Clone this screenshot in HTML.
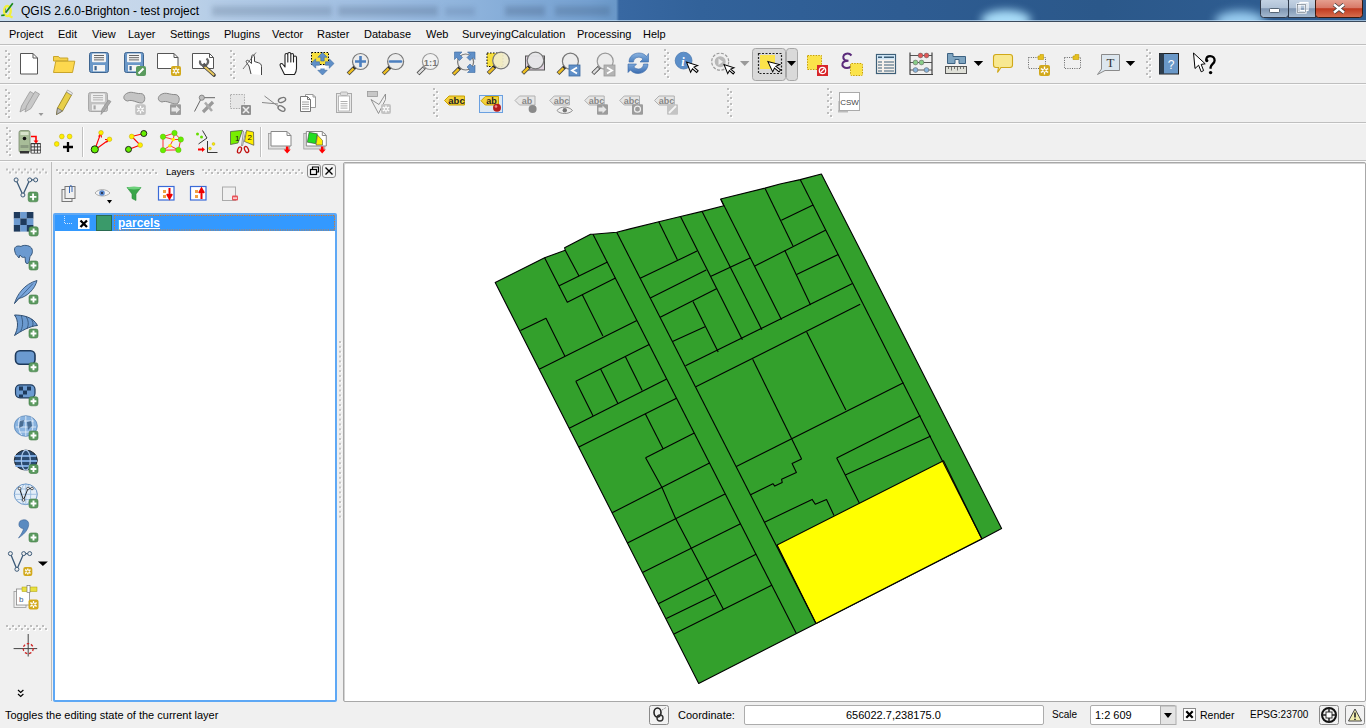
<!DOCTYPE html>
<html><head><meta charset="utf-8">
<style>
*{box-sizing:border-box;margin:0;padding:0}
html,body{width:1366px;height:728px;overflow:hidden;background:#f0f0f0;font-family:"Liberation Sans",sans-serif;font-size:11px;color:#000}
.a{position:absolute}
#title{left:0;top:0;width:1366px;height:22px;overflow:hidden;background:linear-gradient(90deg,#cfdcec 0px,#c4d6ea 150px,#b2cbe6 230px,#a2c0e2 350px,#8eb3dc 470px,#74a0d0 590px,#6a98c8 616px,#3868a2 619px,#32629a 700px,#2e5c92 900px,#2b588a 1100px,#2e5c90 1250px)}
#title .line{left:0;top:21px;width:1366px;height:1px;background:#3b4a5c}
.menu{top:28px;font-size:11px}
.hl{left:0;width:1366px;height:1px;background:#bfbfbf}
.hw{left:0;width:1366px;height:1px;background:#fbfbfb}
.ic{position:absolute;width:24px;height:24px}
.handle{position:absolute;width:6px;background-image:radial-gradient(circle,#c8c8c8 0.8px,transparent 1px);background-size:3px 3px}
</style></head><body>
<div id="title" class="a">
<div class="a" style="left:212px;top:6px;width:120px;height:10px;background:rgba(50,70,100,0.2);filter:blur(2.5px)"></div>
<div class="a" style="left:338px;top:6px;width:100px;height:10px;background:rgba(50,70,100,0.22);filter:blur(2.5px)"></div>
<div class="a" style="left:445px;top:7px;width:30px;height:9px;background:rgba(50,70,100,0.15);filter:blur(2.5px)"></div>
<div class="a" style="left:505px;top:6px;width:40px;height:10px;background:rgba(40,60,90,0.22);filter:blur(2.5px)"></div>
<div class="a" style="left:555px;top:6px;width:55px;height:10px;background:rgba(40,60,90,0.2);filter:blur(2.5px)"></div>
<div class="a" style="left:981px;top:10px;width:50px;height:20px;border-radius:50%;background:#a8dcf8;filter:blur(4px)"></div>
<div class="a" style="left:1215px;top:11px;width:50px;height:20px;border-radius:50%;background:#98ccf0;filter:blur(5px)"></div>
<div class="a" style="left:0;top:20px;width:1366px;height:1px;background:rgba(200,225,245,0.7)"></div>
<div class="a line"></div>
<div class="a" style="left:21px;top:4px;font-size:12px;color:#000">QGIS 2.6.0-Brighton - test project</div>
</div>
<!-- menu -->
<div class="a menu" style="left:9px">Project</div>
<div class="a menu" style="left:58px">Edit</div>
<div class="a menu" style="left:92px">View</div>
<div class="a menu" style="left:128px">Layer</div>
<div class="a menu" style="left:170px">Settings</div>
<div class="a menu" style="left:224px">Plugins</div>
<div class="a menu" style="left:272px">Vector</div>
<div class="a menu" style="left:317px">Raster</div>
<div class="a menu" style="left:364px">Database</div>
<div class="a menu" style="left:426px">Web</div>
<div class="a menu" style="left:462px">SurveyingCalculation</div>
<div class="a menu" style="left:577px">Processing</div>
<div class="a menu" style="left:643px">Help</div>
<div class="a hl" style="top:44px"></div><div class="a hw" style="top:45px"></div>
<div class="a hl" style="top:83px"></div><div class="a hw" style="top:84px"></div>
<div class="a hl" style="top:122px"></div><div class="a hw" style="top:123px"></div>
<div class="a hl" style="top:160px"></div><div class="a hw" style="top:161px"></div>
<!-- left separator -->
<div class="a" style="left:51px;top:162px;width:1px;height:539px;background:#bcbcbc"></div>
<!-- layers panel -->
<div class="a" style="left:166px;top:166px;font-size:9.5px">Layers</div>
<div class="a" style="left:53px;top:213px;width:284px;height:489px;border:2px solid #5ea8f5;border-radius:2px;background:#fff"></div>
<div class="a" style="left:55px;top:215px;width:280px;height:16px;background:#3399ff"></div>
<div class="a" style="left:118px;top:216px;font-size:12px;font-weight:bold;color:#fff;text-decoration:underline">parcels</div>
<!-- map canvas -->
<div class="a" style="left:343px;top:162px;width:1023px;height:540px;border:1px solid #a8a8a8;border-radius:2px;background:#fff;box-shadow:inset 1px 1px 0 #d4d4d4"></div>
<svg id="map" class="a" style="left:0;top:0" width="1366" height="728"><polygon points="495.2,282.5 544.6,257.8 565.2,250.2 564.6,247.7 590.6,234.3 593.0,234.3 616.7,232.3 630.0,228.9 658.8,221.7 680.5,216.5 702.1,211.4 723.8,205.8 720.7,199.0 765.0,188.1 780.0,184.0 800.2,179.6 821.4,174.0 866.3,261.8 867.6,264.6 1001.6,528.4 981.8,538.9 698.7,683.5" fill="#33a02c" stroke="#000" stroke-width="1.1" stroke-linejoin="round"/>
<polygon points="777.1,544.9 943.5,460.8 981.8,538.7 816.0,623.4" fill="#ffff00" stroke="#000" stroke-width="1.1" stroke-linejoin="round"/>
<polyline points="593.0,234.3 796.2,633.2" fill="none" stroke="#000" stroke-width="1.1" stroke-linejoin="round"/>
<polyline points="616.7,232.3 816.0,623.4" fill="none" stroke="#000" stroke-width="1.1" stroke-linejoin="round"/>
<polyline points="800.2,179.6 981.8,538.8" fill="none" stroke="#000" stroke-width="1.1" stroke-linejoin="round"/>
<polyline points="544.6,257.8 567.3,302.3 615.5,278.0" fill="none" stroke="#000" stroke-width="1.1" stroke-linejoin="round"/>
<polyline points="559.2,285.8 607.5,262.1" fill="none" stroke="#000" stroke-width="1.1" stroke-linejoin="round"/>
<polyline points="565.2,250.2 579.0,276.1" fill="none" stroke="#000" stroke-width="1.1" stroke-linejoin="round"/>
<polyline points="582.3,294.8 602.9,336.1" fill="none" stroke="#000" stroke-width="1.1" stroke-linejoin="round"/>
<polyline points="520.5,330.5 546.0,318.2 564.8,356.0" fill="none" stroke="#000" stroke-width="1.1" stroke-linejoin="round"/>
<polyline points="539.2,369.3 636.9,320.5" fill="none" stroke="#000" stroke-width="1.1" stroke-linejoin="round"/>
<polyline points="575.8,381.2 649.2,344.6" fill="none" stroke="#000" stroke-width="1.1" stroke-linejoin="round"/>
<polyline points="575.8,381.2 593.1,416.1" fill="none" stroke="#000" stroke-width="1.1" stroke-linejoin="round"/>
<polyline points="600.6,368.9 617.9,403.6" fill="none" stroke="#000" stroke-width="1.1" stroke-linejoin="round"/>
<polyline points="625.3,356.5 642.2,390.5" fill="none" stroke="#000" stroke-width="1.1" stroke-linejoin="round"/>
<polyline points="569.2,428.2 666.7,379.0" fill="none" stroke="#000" stroke-width="1.1" stroke-linejoin="round"/>
<polyline points="578.8,447.1 676.5,398.2" fill="none" stroke="#000" stroke-width="1.1" stroke-linejoin="round"/>
<polyline points="645.3,413.7 663.2,449.0" fill="none" stroke="#000" stroke-width="1.1" stroke-linejoin="round"/>
<polyline points="645.6,457.8 694.3,433.1" fill="none" stroke="#000" stroke-width="1.1" stroke-linejoin="round"/>
<polyline points="645.6,457.8 662.1,487.7 667.9,501.1 675.5,518.2 723.5,609.5" fill="none" stroke="#000" stroke-width="1.1" stroke-linejoin="round"/>
<polyline points="612.1,512.8 709.5,463.0" fill="none" stroke="#000" stroke-width="1.1" stroke-linejoin="round"/>
<polyline points="627.4,542.9 725.0,493.9" fill="none" stroke="#000" stroke-width="1.1" stroke-linejoin="round"/>
<polyline points="642.5,572.6 740.5,523.8" fill="none" stroke="#000" stroke-width="1.1" stroke-linejoin="round"/>
<polyline points="658.3,603.7 756.0,554.3" fill="none" stroke="#000" stroke-width="1.1" stroke-linejoin="round"/>
<polyline points="666.4,618.6 714.7,595.1" fill="none" stroke="#000" stroke-width="1.1" stroke-linejoin="round"/>
<polyline points="674.0,634.0 771.7,585.2" fill="none" stroke="#000" stroke-width="1.1" stroke-linejoin="round"/>
<polyline points="658.8,221.7 677.4,259.8" fill="none" stroke="#000" stroke-width="1.1" stroke-linejoin="round"/>
<polyline points="640.2,278.3 697.0,251.1" fill="none" stroke="#000" stroke-width="1.1" stroke-linejoin="round"/>
<polyline points="680.5,216.5 742.4,339.8" fill="none" stroke="#000" stroke-width="1.1" stroke-linejoin="round"/>
<polyline points="702.1,211.4 761.9,329.8" fill="none" stroke="#000" stroke-width="1.1" stroke-linejoin="round"/>
<polyline points="720.7,199.0 781.5,319.8" fill="none" stroke="#000" stroke-width="1.1" stroke-linejoin="round"/>
<polyline points="784.7,250.2 810.6,304.9" fill="none" stroke="#000" stroke-width="1.1" stroke-linejoin="round"/>
<polyline points="765.2,188.8 793.0,246.1" fill="none" stroke="#000" stroke-width="1.1" stroke-linejoin="round"/>
<polyline points="650.3,297.9 706.2,270.1" fill="none" stroke="#000" stroke-width="1.1" stroke-linejoin="round"/>
<polyline points="660.2,317.2 717.0,288.6" fill="none" stroke="#000" stroke-width="1.1" stroke-linejoin="round"/>
<polyline points="693.0,301.5 718.2,352.1" fill="none" stroke="#000" stroke-width="1.1" stroke-linejoin="round"/>
<polyline points="672.5,341.5 705.0,326.7" fill="none" stroke="#000" stroke-width="1.1" stroke-linejoin="round"/>
<polyline points="711.0,276.3 750.6,257.7" fill="none" stroke="#000" stroke-width="1.1" stroke-linejoin="round"/>
<polyline points="754.8,266.0 825.9,230.1" fill="none" stroke="#000" stroke-width="1.1" stroke-linejoin="round"/>
<polyline points="781.4,220.2 813.1,204.9" fill="none" stroke="#000" stroke-width="1.1" stroke-linejoin="round"/>
<polyline points="796.6,274.4 838.3,254.4" fill="none" stroke="#000" stroke-width="1.1" stroke-linejoin="round"/>
<polyline points="685.5,365.8 852.5,283.5" fill="none" stroke="#000" stroke-width="1.1" stroke-linejoin="round"/>
<polyline points="695.8,386.8 860.2,304.3" fill="none" stroke="#000" stroke-width="1.1" stroke-linejoin="round"/>
<polyline points="752.7,359.3 801.6,458.9" fill="none" stroke="#000" stroke-width="1.1" stroke-linejoin="round"/>
<polyline points="806.7,332.1 845.8,410.0" fill="none" stroke="#000" stroke-width="1.1" stroke-linejoin="round"/>
<polyline points="736.3,466.4 903.5,382.8" fill="none" stroke="#000" stroke-width="1.1" stroke-linejoin="round"/>
<polyline points="801.6,458.9 792.1,463.5 796.4,472.5 781.6,479.3 782.2,482.4 774.8,486.1 772.9,483.7 750.6,494.8" fill="none" stroke="#000" stroke-width="1.1" stroke-linejoin="round"/>
<polyline points="836.7,458.0 920.5,415.8" fill="none" stroke="#000" stroke-width="1.1" stroke-linejoin="round"/>
<polyline points="836.7,458.0 859.3,502.9" fill="none" stroke="#000" stroke-width="1.1" stroke-linejoin="round"/>
<polyline points="845.3,474.9 930.9,436.1" fill="none" stroke="#000" stroke-width="1.1" stroke-linejoin="round"/>
<polyline points="764.5,522.2 812.1,499.4 815.3,504.3 826.5,499.6 834.0,515.5" fill="none" stroke="#000" stroke-width="1.1" stroke-linejoin="round"/></svg>
<!-- status bar -->
<div class="a" style="left:5px;top:709px">Toggles the editing state of the current layer</div>
<div class="a" style="left:678px;top:709px">Coordinate:</div>
<div class="a" style="left:744px;top:705px;width:300px;height:20px;border:1px solid #acacac;border-radius:2px;background:#fff"></div>
<div class="a" style="left:846px;top:709px">656022.7,238175.0</div>
<div class="a" style="left:1052px;top:709px;font-size:10px">Scale</div>
<div class="a" style="left:1090px;top:705px;width:86px;height:20px;border:1px solid #acacac;border-radius:2px;background:#fff"></div>
<div class="a" style="left:1095px;top:709px">1:2 609</div>
<div class="a" style="left:1200px;top:709px;font-size:10.5px">Render</div>
<div class="a" style="left:1250px;top:709px;font-size:10px">EPSG:23700</div>
<svg class="a" style="left:0;top:0;overflow:visible" width="1366" height="728"><defs><linearGradient id="gref" x1="0" y1="0" x2="0" y2="1"><stop offset="0" stop-color="#8cb4e0"/><stop offset="1" stop-color="#4a80c0"/></linearGradient><linearGradient id="gref2" x1="0" y1="0" x2="0" y2="1"><stop offset="0" stop-color="#7aa6d8"/><stop offset="1" stop-color="#3a6cb0"/></linearGradient><linearGradient id="gb" x1="0" y1="0" x2="0" y2="1"><stop offset="0" stop-color="#c8d6e6"/><stop offset="0.5" stop-color="#b0c2d6"/><stop offset="0.55" stop-color="#7f96b2"/><stop offset="1" stop-color="#a8bcd2"/></linearGradient><linearGradient id="gr" x1="0" y1="0" x2="0" y2="1"><stop offset="0" stop-color="#e8a898"/><stop offset="0.5" stop-color="#d87a68"/><stop offset="0.55" stop-color="#c03a20"/><stop offset="1" stop-color="#d87050"/></linearGradient></defs><rect x="6" y="51" width="2" height="2" fill="#fff"/><rect x="5" y="50" width="2" height="2" fill="#bdbdbd"/>
<rect x="9" y="54" width="2" height="2" fill="#fff"/><rect x="8" y="53" width="2" height="2" fill="#bdbdbd"/>
<rect x="6" y="57" width="2" height="2" fill="#fff"/><rect x="5" y="56" width="2" height="2" fill="#bdbdbd"/>
<rect x="9" y="60" width="2" height="2" fill="#fff"/><rect x="8" y="59" width="2" height="2" fill="#bdbdbd"/>
<rect x="6" y="63" width="2" height="2" fill="#fff"/><rect x="5" y="62" width="2" height="2" fill="#bdbdbd"/>
<rect x="9" y="66" width="2" height="2" fill="#fff"/><rect x="8" y="65" width="2" height="2" fill="#bdbdbd"/>
<rect x="6" y="69" width="2" height="2" fill="#fff"/><rect x="5" y="68" width="2" height="2" fill="#bdbdbd"/>
<rect x="9" y="72" width="2" height="2" fill="#fff"/><rect x="8" y="71" width="2" height="2" fill="#bdbdbd"/>
<rect x="6" y="75" width="2" height="2" fill="#fff"/><rect x="5" y="74" width="2" height="2" fill="#bdbdbd"/>
<rect x="9" y="78" width="2" height="2" fill="#fff"/><rect x="8" y="77" width="2" height="2" fill="#bdbdbd"/>
<path d="M20.5 53.5H33L37.5 58V74.0H20.5Z" fill="#fff" stroke="#555" stroke-width="1"/>
<path d="M33 53.5V58H37.5" fill="none" stroke="#555" stroke-width="1"/>
<path d="M53.5 56.5H58.5L59.8 58H67.8V61H53.5Z" fill="#f5d24a" stroke="#c9a52a" stroke-width="1"/>
<path d="M53.5 72.5L55.8 61.2H74.8L72.5 72.5Z" fill="#fdd84e" stroke="#c9a52a" stroke-width="1"/>
<rect x="89.5" y="52.5" width="19" height="20" rx="2" fill="#6b98c8" stroke="#3e6590" stroke-width="1"/>
<rect x="92" y="53.5" width="14" height="8.82" rx="1" fill="#f4f4f4"/>
<path d="M94 55.5H104" stroke="#555" stroke-width="0.9"/>
<path d="M94 57.7H104" stroke="#555" stroke-width="0.9"/>
<path d="M94 59.9H104" stroke="#555" stroke-width="0.9"/>
<rect x="93" y="65.02" width="12" height="6.3" fill="#f4f4f4"/>
<rect x="94.5" y="66.07" width="2.2" height="4.2" fill="#3e6590"/>
<rect x="124.5" y="52.5" width="19" height="20" rx="2" fill="#6b98c8" stroke="#3e6590" stroke-width="1"/>
<rect x="127" y="53.5" width="14" height="8.82" rx="1" fill="#f4f4f4"/>
<path d="M129 55.5H139" stroke="#555" stroke-width="0.9"/>
<path d="M129 57.7H139" stroke="#555" stroke-width="0.9"/>
<path d="M129 59.9H139" stroke="#555" stroke-width="0.9"/>
<rect x="128" y="65.02" width="12" height="6.3" fill="#f4f4f4"/>
<rect x="129.5" y="66.07" width="2.2" height="4.2" fill="#3e6590"/>
<rect x="136" y="66" width="10" height="10" rx="2" fill="#5a9a5e"/><path d="M138.5 73.5L143.5 68.5" stroke="#fff" stroke-width="2"/>
<path d="M157.5 53.5H174.0L178.0 57.5V68.5H157.5Z" fill="#fff" stroke="#555" stroke-width="1"/>
<path d="M174.0 53.5V57.5H178.0" fill="none" stroke="#555" stroke-width="1"/>
<rect x="171" y="66" width="10" height="10" rx="2" fill="#d2a91c"/>
<path d="M176.0 67.5V74.5M172.8 69.1L179.2 72.9M172.8 72.9L179.2 69.1" stroke="#fff" stroke-width="1.3"/>
<circle cx="176.0" cy="71.0" r="1.6" fill="#d2a91c" stroke="#fff" stroke-width="0.8"/>
<path d="M192.5 53.5H209.5L213.5 57.5V68.5H192.5Z" fill="#fff" stroke="#555" stroke-width="1"/>
<path d="M209.5 53.5V57.5H213.5" fill="none" stroke="#555" stroke-width="1"/>
<path d="M204 66L214 75" stroke="#333" stroke-width="3.6" stroke-linecap="round"/><path d="M205 67L213.5 74.5" stroke="#e8c860" stroke-width="2.2" stroke-linecap="round"/>
<path d="M200.2 60.5A4 4 0 1 0 206.5 58.5" fill="none" stroke="#666" stroke-width="2.2"/><path d="M203.5 63.5L206 66" stroke="#555" stroke-width="2.4"/>
<rect x="231" y="51" width="2" height="2" fill="#fff"/><rect x="230" y="50" width="2" height="2" fill="#bdbdbd"/>
<rect x="234" y="54" width="2" height="2" fill="#fff"/><rect x="233" y="53" width="2" height="2" fill="#bdbdbd"/>
<rect x="231" y="57" width="2" height="2" fill="#fff"/><rect x="230" y="56" width="2" height="2" fill="#bdbdbd"/>
<rect x="234" y="60" width="2" height="2" fill="#fff"/><rect x="233" y="59" width="2" height="2" fill="#bdbdbd"/>
<rect x="231" y="63" width="2" height="2" fill="#fff"/><rect x="230" y="62" width="2" height="2" fill="#bdbdbd"/>
<rect x="234" y="66" width="2" height="2" fill="#fff"/><rect x="233" y="65" width="2" height="2" fill="#bdbdbd"/>
<rect x="231" y="69" width="2" height="2" fill="#fff"/><rect x="230" y="68" width="2" height="2" fill="#bdbdbd"/>
<rect x="234" y="72" width="2" height="2" fill="#fff"/><rect x="233" y="71" width="2" height="2" fill="#bdbdbd"/>
<rect x="231" y="75" width="2" height="2" fill="#fff"/><rect x="230" y="74" width="2" height="2" fill="#bdbdbd"/>
<rect x="234" y="78" width="2" height="2" fill="#fff"/><rect x="233" y="77" width="2" height="2" fill="#bdbdbd"/>
<path d="M251 74L249 66L246.5 62.5C245.5 61 247 59.5 248.5 60.8L251.5 63.5V56.5C251.5 54.5 254.5 54.5 254.5 56.5V61.5L258.5 62.8C260.5 63.5 261.5 64.5 261.5 66.5V75" fill="#fff" stroke="#444" stroke-width="1"/>
<path d="M243 69L256 52.5" stroke="#555" stroke-width="0.8"/>
<path d="M284.5 74.5L280.5 66.5C279 64 281.5 62.5 283 64.5L285 67V55C285 53 287.8 53 287.8 55V62V54C287.8 52 290.8 52 290.8 54V62V55C290.8 53 293.5 53 293.5 55V62V57.5C293.5 55.5 296.5 55.5 296.5 57.5V68.5C296.5 71 295.5 73 294.5 74.5Z" fill="#fff" stroke="#222" stroke-width="1.1" stroke-linejoin="round"/>
<rect x="311.5" y="52.5" width="17" height="12" fill="#f7df3a" stroke="#000" stroke-width="1" stroke-dasharray="1.5,1.5"/>
<path d="M322.5 52.5L317.8 57.2H320.8V61H324.2V57.2H327.2Z" fill="#5f8fc8" stroke="#3c6aa0" stroke-width="0.6"/>
<path d="M311 63.5L315.7 58.8V61.8H319.5V65.2H315.7V68.2Z" fill="#5f8fc8" stroke="#3c6aa0" stroke-width="0.6"/>
<path d="M334 63.5L329.3 58.8V61.8H325.5V65.2H329.3V68.2Z" fill="#5f8fc8" stroke="#3c6aa0" stroke-width="0.6"/>
<path d="M322.5 75L317.8 70.3H320.8V66.5H324.2V70.3H327.2Z" fill="#5f8fc8" stroke="#3c6aa0" stroke-width="0.6"/>
<rect x="318.5" y="66" width="8" height="2.5" fill="#fff"/>
<path d="M354.9 67.1L348.1 73.9" stroke="#444" stroke-width="4" stroke-linecap="butt"/>
<path d="M353.7 68.3L348.5 73.5" stroke="#f0c020" stroke-width="2.4"/>
<circle cx="354.74" cy="67.26" r="1.6" fill="#222"/>
<circle cx="360.5" cy="61.5" r="8" fill="#ececec" stroke="#777" stroke-width="1.2"/>
<path d="M360.5 56V67M355 61.5H366" stroke="#4c7fbf" stroke-width="2.6"/>
<path d="M390.0 67.1L383.20000000000005 73.9" stroke="#444" stroke-width="4" stroke-linecap="butt"/>
<path d="M388.8 68.3L383.6 73.5" stroke="#f0c020" stroke-width="2.4"/>
<circle cx="389.84000000000003" cy="67.26" r="1.6" fill="#222"/>
<circle cx="395.6" cy="61.5" r="8" fill="#ececec" stroke="#777" stroke-width="1.2"/>
<path d="M390 61.5H401" stroke="#4c7fbf" stroke-width="2.6" stroke-linecap="round"/>
<path d="M424.79999999999995 67.1L418.0 73.9" stroke="#444" stroke-width="4" stroke-linecap="butt"/>
<path d="M423.59999999999997 68.3L418.4 73.5" stroke="#ddd" stroke-width="2.4"/>
<circle cx="424.64" cy="67.26" r="1.6" fill="#999"/>
<circle cx="430.4" cy="61.5" r="8" fill="#f2f2f2" stroke="#999" stroke-width="1.2"/>
<text x="430.6" y="65.5" font-family="Liberation Sans" font-weight="bold" font-size="9.5" fill="#777" text-anchor="middle">1:1</text>
<path d="M460.0 67.6L453.20000000000005 74.4" stroke="#444" stroke-width="4" stroke-linecap="butt"/>
<path d="M458.8 68.8L453.6 74.0" stroke="#f0c020" stroke-width="2.4"/>
<circle cx="459.84000000000003" cy="67.76" r="1.6" fill="#222"/>
<circle cx="465.6" cy="62" r="8" fill="#ececec" stroke="#777" stroke-width="1.2"/>
<path d="M454.5 52H462L459.5 54.5L462.5 57.5L459.5 60.5L456.5 57.5L454.5 59.5Z M475 52H467.5L470 54.5L467 57.5L470 60.5L473 57.5L475 59.5Z M475 72.5H467.5L470 70L467 67L470 64L473 67L475 65Z" fill="#5f8fc8" stroke="#3c6aa0" stroke-width="0.6"/>
<rect x="487" y="53" width="16" height="13.5" fill="#f7df3a" stroke="#000" stroke-width="1" stroke-dasharray="1.5,1.5"/>
<path d="M495.19 66.31L488.135 73.36500000000001" stroke="#444" stroke-width="4" stroke-linecap="butt"/>
<path d="M493.945 67.555L488.55 72.95" stroke="#f0c020" stroke-width="2.4"/>
<circle cx="495.024" cy="66.476" r="1.6" fill="#222"/>
<circle cx="501" cy="60.5" r="8.3" fill="rgba(240,236,205,0.92)" stroke="#777" stroke-width="1.2"/>
<rect x="525.5" y="56" width="19" height="14" fill="#ddd0dd" stroke="#555" stroke-width="1"/>
<path d="M529.69 66.31L522.635 73.36500000000001" stroke="#444" stroke-width="4" stroke-linecap="butt"/>
<path d="M528.445 67.555L523.05 72.95" stroke="#f0c020" stroke-width="2.4"/>
<circle cx="529.524" cy="66.476" r="1.6" fill="#222"/>
<circle cx="535.5" cy="60.5" r="8.3" fill="rgba(230,230,232,0.95)" stroke="#777" stroke-width="1.2"/>
<path d="M564.8 66.8L558.0 73.60000000000001" stroke="#444" stroke-width="4" stroke-linecap="butt"/>
<path d="M563.6 68.0L558.4 73.2" stroke="#f0c020" stroke-width="2.4"/>
<circle cx="564.64" cy="66.96000000000001" r="1.6" fill="#222"/>
<circle cx="570.4" cy="61.2" r="8" fill="#ececec" stroke="#777" stroke-width="1.2"/>
<rect x="569" y="65" width="11" height="11" fill="#5f8fc8" stroke="#3c6aa0" stroke-width="0.8"/><path d="M577 67.5L572 70.5L577 73.5" fill="none" stroke="#fff" stroke-width="1.8"/>
<path d="M599.6 66.8L592.8000000000001 73.60000000000001" stroke="#444" stroke-width="4" stroke-linecap="butt"/>
<path d="M598.4000000000001 68.0L593.2 73.2" stroke="#ddd" stroke-width="2.4"/>
<circle cx="599.44" cy="66.96000000000001" r="1.6" fill="#888"/>
<circle cx="605.2" cy="61.2" r="8" fill="#ececec" stroke="#999" stroke-width="1.2"/>
<rect x="604" y="65" width="11" height="11" fill="#b4b4b4" stroke="#999" stroke-width="0.8"/><path d="M607 67.5L612 70.5L607 73.5" fill="none" stroke="#fff" stroke-width="1.8"/>
<path d="M629 62C629 56 634 53 639 53C642.5 53 645 54.5 646.5 56.5L648.5 53.5V62H640L643 59C641.8 57.8 640.5 57.3 638.5 57.3C635.5 57.3 633.5 59.5 633.5 62Z" fill="url(#gref)" stroke="#3a6aa8" stroke-width="0.6"/>
<path d="M648 64C648 70 643 73.5 638 73.5C634.5 73.5 632 72 630.5 70L628 72.5V64H636.5L633.8 67C635 68.2 636.5 69 638.5 69C641.5 69 643.5 66.8 643.5 64Z" fill="url(#gref2)" stroke="#3a6aa8" stroke-width="0.6"/>
<rect x="665" y="50" width="2" height="2" fill="#fff"/><rect x="664" y="49" width="2" height="2" fill="#bdbdbd"/>
<rect x="668" y="53" width="2" height="2" fill="#fff"/><rect x="667" y="52" width="2" height="2" fill="#bdbdbd"/>
<rect x="665" y="56" width="2" height="2" fill="#fff"/><rect x="664" y="55" width="2" height="2" fill="#bdbdbd"/>
<rect x="668" y="59" width="2" height="2" fill="#fff"/><rect x="667" y="58" width="2" height="2" fill="#bdbdbd"/>
<rect x="665" y="62" width="2" height="2" fill="#fff"/><rect x="664" y="61" width="2" height="2" fill="#bdbdbd"/>
<rect x="668" y="65" width="2" height="2" fill="#fff"/><rect x="667" y="64" width="2" height="2" fill="#bdbdbd"/>
<rect x="665" y="68" width="2" height="2" fill="#fff"/><rect x="664" y="67" width="2" height="2" fill="#bdbdbd"/>
<rect x="668" y="71" width="2" height="2" fill="#fff"/><rect x="667" y="70" width="2" height="2" fill="#bdbdbd"/>
<rect x="665" y="74" width="2" height="2" fill="#fff"/><rect x="664" y="73" width="2" height="2" fill="#bdbdbd"/>
<rect x="668" y="77" width="2" height="2" fill="#fff"/><rect x="667" y="76" width="2" height="2" fill="#bdbdbd"/>
<circle cx="683.6" cy="60.6" r="8.4" fill="#5b8ec9" stroke="#4677b0" stroke-width="0.8"/>
<text x="683" y="65.5" font-family="Liberation Serif" font-style="italic" font-weight="bold" font-size="12" fill="#fff" text-anchor="middle">i</text>
<path transform="translate(686.5,62) rotate(-22)" d="M0.0 0.0L0.0 11.0L3.0 8.5L5.5 13.5L7.5 12.5L5.0 7.5L9.0 7.5Z" fill="#fff" stroke="#000" stroke-width="1"/>
<circle cx="720.2" cy="61.7" r="8.5" fill="#f0f0f0" stroke="#9a9a9a" stroke-width="1.2" stroke-dasharray="3,1.5"/>
<circle cx="720.2" cy="61.7" r="5.5" fill="#b8b8b8"/><path d="M718.5 58.5V65L723 61.7Z" fill="#eee"/>
<path transform="translate(724,64.5) rotate(-22)" d="M0.0 0.0L0.0 9.9L2.7 7.7L5.0 12.2L6.8 11.2L4.5 6.8L8.1 6.8Z" fill="#fff" stroke="#000" stroke-width="1"/>
<path d="M740 61H749.5L744.75 66Z" fill="#9a9a9a"/>
<rect x="752.5" y="48.5" width="33" height="32" rx="3" fill="#d9d9d9" stroke="#a7a7a7" stroke-width="1"/>
<rect x="786.5" y="48.5" width="11" height="32" rx="3" fill="#d9d9d9" stroke="#a7a7a7" stroke-width="1"/>
<path d="M787 61H796L791.5 66Z" fill="#000"/>
<rect x="758.5" y="53.5" width="23" height="20" fill="none" stroke="#222" stroke-width="1.2" stroke-dasharray="2,1.5"/>
<rect x="760" y="55" width="15" height="14" fill="#fbe34a"/>
<path transform="translate(767.8,61.4) rotate(-25)" d="M0.0 0.0L0.0 11.6L3.2 8.9L5.8 14.2L7.9 13.1L5.2 7.9L9.5 7.9Z" fill="#fff" stroke="#000" stroke-width="1"/>
<rect x="807.5" y="55.5" width="14" height="14" fill="#fbe34a" stroke="#c8a000" stroke-width="1" stroke-dasharray="1.5,1.2"/>
<rect x="817" y="65" width="11" height="11" fill="#d8262a"/><circle cx="822.5" cy="70.5" r="3.2" fill="none" stroke="#fff" stroke-width="1.2"/><path d="M820.5 72.5L824.5 68.5" stroke="#fff" stroke-width="1.2"/>
<path d="M851.5 55.5C850 53.8 847.5 53.3 845.5 54C843 55 842.5 58 844.5 59.8C846 60.8 847.5 60.8 848.5 60.8C846.5 60.8 843.5 61 842.5 63.5C841.8 66 844 68 847 68C849 68 850.5 67.2 851.5 66" fill="none" stroke="#5a2a7a" stroke-width="2"/>
<rect x="850.5" y="63.5" width="12" height="12" rx="1" fill="#fbe34a" stroke="#c8a000" stroke-width="1" stroke-dasharray="1.5,1.2"/>
<rect x="876.5" y="54.5" width="19" height="19" fill="#f7f2ec" stroke="#3d5f78" stroke-width="1.2"/>
<rect x="877" y="55" width="18" height="4.5" fill="#cde4f5"/>
<path d="M878 57.2H882M884 57.2H894" stroke="#3d5f78" stroke-width="1.4"/>
<path d="M878 62H882M884 62H894" stroke="#3d5f78" stroke-width="1.1"/>
<path d="M878 65H882M884 65H894" stroke="#3d5f78" stroke-width="1.1"/>
<path d="M878 68H882M884 68H894" stroke="#3d5f78" stroke-width="1.1"/>
<path d="M878 71H882M884 71H894" stroke="#3d5f78" stroke-width="1.1"/>
<path d="M910 52.5V74M932 52.5V74M909.5 74.5H933" stroke="#444" stroke-width="1.2"/><path d="M910 55.5H932M910 62.5H932M910 70H932" stroke="#444" stroke-width="0.9"/>
<circle cx="920.5" cy="55.5" r="2.4" fill="#e05858" stroke="#555" stroke-width="0.5"/>
<circle cx="926.5" cy="55.5" r="2.4" fill="#e05858" stroke="#555" stroke-width="0.5"/>
<circle cx="915.5" cy="62.5" r="2.4" fill="#88cc88" stroke="#555" stroke-width="0.5"/>
<circle cx="921.5" cy="62.5" r="2.4" fill="#88cc88" stroke="#555" stroke-width="0.5"/>
<circle cx="915.5" cy="70" r="2.4" fill="#88b4dd" stroke="#555" stroke-width="0.5"/>
<circle cx="926.5" cy="70" r="2.4" fill="#88b4dd" stroke="#555" stroke-width="0.5"/>
<path d="M947.5 53.5H953V56.5H965.5V63.5H959V59.5H955V63.5H947.5Z" fill="#7ea4c0" stroke="#3d6282" stroke-width="1"/>
<rect x="945.5" y="66.5" width="21" height="7" fill="#dfe0d8" stroke="#555" stroke-width="1"/>
<path d="M948.5 67V69M951.5 67V70.5M954.5 67V69M957.5 67V70.5M960.5 67V69M963.5 67V69" stroke="#555" stroke-width="0.8"/>
<path d="M973.7 61H983.2L978.45 66Z" fill="#000"/>
<path d="M996 54.5H1010C1011.5 54.5 1012.5 55.5 1012.5 57V65C1012.5 66.5 1011.5 67.5 1010 67.5H1001L997.5 72.5L998.5 67.5H996C994.5 67.5 993.5 66.5 993.5 65V57C993.5 55.5 994.5 54.5 996 54.5Z" fill="#f8e890" stroke="#d0a818" stroke-width="1.1"/>
<rect x="1028.5" y="57.5" width="17" height="11" fill="none" stroke="#555" stroke-width="0.9" stroke-dasharray="1,1.3"/>
<path d="M1038 59.5V56H1040V54.5H1043.5V59.5Z" fill="#e6c020" stroke="#c09a00" stroke-width="0.6"/>
<rect x="1039" y="65" width="11" height="11" rx="2" fill="#d2a91c"/>
<path d="M1044.5 66.5V74.5M1040.8 68.6L1048.2 72.4M1040.8 72.4L1048.2 68.6" stroke="#fff" stroke-width="1.3"/>
<circle cx="1044.5" cy="70.5" r="1.6" fill="#d2a91c" stroke="#fff" stroke-width="0.8"/>
<rect x="1064.5" y="57.5" width="16" height="11" fill="none" stroke="#555" stroke-width="0.9" stroke-dasharray="1,1.3"/>
<path d="M1073 59.5V56H1075V54.5H1078.8V59.5Z" fill="#e6c020" stroke="#c09a00" stroke-width="0.6"/>
<path d="M1101.5 54.5H1119.5V70.5H1105L1097.5 74.5L1101.5 69Z" fill="#dce6ee" stroke="#8a8a8a" stroke-width="1"/>
<text x="1110.5" y="67" font-family="Liberation Serif" font-size="13" fill="#333" text-anchor="middle">T</text>
<path d="M1125.7 61H1135.2L1130.45 66Z" fill="#000"/>
<rect x="1147" y="50" width="2" height="2" fill="#fff"/><rect x="1146" y="49" width="2" height="2" fill="#bdbdbd"/>
<rect x="1150" y="53" width="2" height="2" fill="#fff"/><rect x="1149" y="52" width="2" height="2" fill="#bdbdbd"/>
<rect x="1147" y="56" width="2" height="2" fill="#fff"/><rect x="1146" y="55" width="2" height="2" fill="#bdbdbd"/>
<rect x="1150" y="59" width="2" height="2" fill="#fff"/><rect x="1149" y="58" width="2" height="2" fill="#bdbdbd"/>
<rect x="1147" y="62" width="2" height="2" fill="#fff"/><rect x="1146" y="61" width="2" height="2" fill="#bdbdbd"/>
<rect x="1150" y="65" width="2" height="2" fill="#fff"/><rect x="1149" y="64" width="2" height="2" fill="#bdbdbd"/>
<rect x="1147" y="68" width="2" height="2" fill="#fff"/><rect x="1146" y="67" width="2" height="2" fill="#bdbdbd"/>
<rect x="1150" y="71" width="2" height="2" fill="#fff"/><rect x="1149" y="70" width="2" height="2" fill="#bdbdbd"/>
<rect x="1147" y="74" width="2" height="2" fill="#fff"/><rect x="1146" y="73" width="2" height="2" fill="#bdbdbd"/>
<rect x="1150" y="77" width="2" height="2" fill="#fff"/><rect x="1149" y="76" width="2" height="2" fill="#bdbdbd"/>
<rect x="1159.5" y="53.5" width="19" height="20.5" fill="#6a98c8" stroke="#222" stroke-width="1"/><rect x="1159.5" y="53.5" width="4.5" height="20.5" fill="#2e3e4e"/>
<text x="1171" y="69" font-family="Liberation Sans" font-size="12" fill="#fff" text-anchor="middle">?</text>
<path d="M1193.5 53L1195 68.5L1198.6 65.2L1201.2 71.8L1203.6 70.6L1201.2 64.4L1205.2 63.8Z" fill="#fff" stroke="#000" stroke-width="1"/>
<path d="M1206.2 60.2C1206.2 57.5 1208 56.2 1210.2 56.2C1212.8 56.2 1214.6 58 1214.6 60.4C1214.6 63.4 1211 64.2 1210.6 67.4V68.8" fill="none" stroke="#000" stroke-width="2.3"/><circle cx="1210.6" cy="72.6" r="1.7" fill="#000"/><circle cx="1206.8" cy="60.6" r="1.6" fill="#000"/>
<rect x="6" y="90" width="2" height="2" fill="#fff"/><rect x="5" y="89" width="2" height="2" fill="#bdbdbd"/>
<rect x="9" y="93" width="2" height="2" fill="#fff"/><rect x="8" y="92" width="2" height="2" fill="#bdbdbd"/>
<rect x="6" y="96" width="2" height="2" fill="#fff"/><rect x="5" y="95" width="2" height="2" fill="#bdbdbd"/>
<rect x="9" y="99" width="2" height="2" fill="#fff"/><rect x="8" y="98" width="2" height="2" fill="#bdbdbd"/>
<rect x="6" y="102" width="2" height="2" fill="#fff"/><rect x="5" y="101" width="2" height="2" fill="#bdbdbd"/>
<rect x="9" y="105" width="2" height="2" fill="#fff"/><rect x="8" y="104" width="2" height="2" fill="#bdbdbd"/>
<rect x="6" y="108" width="2" height="2" fill="#fff"/><rect x="5" y="107" width="2" height="2" fill="#bdbdbd"/>
<rect x="9" y="111" width="2" height="2" fill="#fff"/><rect x="8" y="110" width="2" height="2" fill="#bdbdbd"/>
<rect x="6" y="114" width="2" height="2" fill="#fff"/><rect x="5" y="113" width="2" height="2" fill="#bdbdbd"/>
<rect x="9" y="117" width="2" height="2" fill="#fff"/><rect x="8" y="116" width="2" height="2" fill="#bdbdbd"/>
<path d="M20 112L21.5 106L30 91.5L34.5 94L26 108.5Z" fill="#c8c8c8" stroke="#9a9a9a" stroke-width="0.8"/>
<path d="M25 112L26.5 106L35 91.5L39.5 94L31 108.5Z" fill="#c8c8c8" stroke="#9a9a9a" stroke-width="0.8"/>
<path d="M38.5 113H43.5L41.0 116Z" fill="#999"/>
<path d="M56.5 114.5L57.5 108L66.5 92L71.5 95L62.5 111Z" fill="#e8cf48" stroke="#9a8420" stroke-width="0.9"/>
<path d="M56.5 114.5L57.5 108L62.5 111Z" fill="#bbb" stroke="#555" stroke-width="0.6"/><path d="M66.5 92L71.5 95L72.5 93L67.5 90Z" fill="#eee" stroke="#888" stroke-width="0.6"/>
<rect x="88.5" y="92.5" width="19" height="19" rx="2" fill="#c2c2c2" stroke="#a8a8a8" stroke-width="1"/>
<rect x="91" y="93.5" width="14" height="8.4" rx="1" fill="#eee"/>
<path d="M93 95.5H103" stroke="#aaa" stroke-width="0.9"/>
<path d="M93 97.7H103" stroke="#aaa" stroke-width="0.9"/>
<path d="M93 99.9H103" stroke="#aaa" stroke-width="0.9"/>
<rect x="92" y="104.4" width="12" height="6.0" fill="#eee"/>
<rect x="93.5" y="105.4" width="2.2" height="4.0" fill="#a8a8a8"/>
<path d="M101 114.5L102 109L108.5 100L111 101.5L104.5 110.5Z" fill="#aaa" stroke="#888" stroke-width="0.6"/>
<path d="M126.5 93.5C131.5 90.5 135.5 94.0 140.5 93.5C146.5 93.5 145.5 103.0 141.5 103.0C136.5 103.0 132.5 99.0 127.5 101.0C122.5 100.0 123.0 95.5 126.5 93.5Z" fill="#c4c4c4" stroke="#8a8a8a" stroke-width="1"/>
<rect x="135.2" y="104.3" width="10.6" height="10.6" rx="2" fill="#c2c2c2"/>
<path d="M140.5 105.8V113.39999999999999M137.0 107.69999999999999L143.99999999999997 111.5M137.0 111.5L143.99999999999997 107.69999999999999" stroke="#fff" stroke-width="1.3"/>
<circle cx="140.5" cy="109.6" r="1.6" fill="#c2c2c2" stroke="#fff" stroke-width="0.8"/>
<path d="M161 94.5C166 91.5 170 95.0 175 94.5C181 94.5 180 104.0 176 104.0C171 104.0 167 100.0 162 102.0C157 101.0 157.5 96.5 161 94.5Z" fill="#c4c4c4" stroke="#8a8a8a" stroke-width="1"/>
<rect x="170" y="104.3" width="11" height="10.6" rx="1" fill="#9c9c9c"/><path d="M171.5 107.5H176V105.5L180 109.5L176 113.5V111.5H171.5Z" fill="#e6e6e6"/>
<path d="M194.5 111.5L201.5 98M201.8 97.7H215" stroke="#666" stroke-width="1"/><circle cx="201.8" cy="97.7" r="2.6" fill="#bdbdbd" stroke="#777" stroke-width="0.8"/>
<path d="M203 112L213 102" stroke="#999" stroke-width="3.2"/><path d="M205 102.5L212 111" stroke="#aaa" stroke-width="2.5"/>
<rect x="230.5" y="94.5" width="14" height="14" fill="#e6e6e6" stroke="#aaa" stroke-width="1" stroke-dasharray="1.5,1.2"/>
<rect x="241" y="105" width="10" height="10" rx="1" fill="#909090"/><path d="M243 107L249 113M249 107L243 113" stroke="#eee" stroke-width="1.6"/>
<path d="M262 102.5L278 104M264.5 96L279 107" stroke="#888" stroke-width="1"/><ellipse cx="282" cy="100" rx="3.8" ry="2.2" transform="rotate(-20 282 100)" fill="none" stroke="#777" stroke-width="1.3"/><ellipse cx="281.5" cy="108.5" rx="3.8" ry="2.2" transform="rotate(30 281.5 108.5)" fill="none" stroke="#777" stroke-width="1.3"/>
<path d="M305.5 94.5H313L315.5 97V107.5H305.5Z" fill="#fff" stroke="#999" stroke-width="1"/>
<path d="M313 94.5V97H315.5" fill="none" stroke="#999" stroke-width="1"/>
<path d="M300.5 96.5H307.5L310.5 99.5V111.5H300.5Z" fill="#fff" stroke="#777" stroke-width="1"/>
<path d="M307.5 96.5V99.5H310.5" fill="none" stroke="#777" stroke-width="1"/>
<path d="M302 102.0H309" stroke="#888" stroke-width="0.8"/>
<path d="M302 104.3H309" stroke="#888" stroke-width="0.8"/>
<path d="M302 106.6H309" stroke="#888" stroke-width="0.8"/>
<path d="M302 108.9H309" stroke="#888" stroke-width="0.8"/>
<rect x="336.5" y="93.5" width="15" height="19" fill="#e8e8e8" stroke="#aaa" stroke-width="1"/><rect x="338.5" y="96" width="11" height="15" fill="#fff" stroke="#aaa" stroke-width="0.8"/><rect x="340.5" y="92" width="7" height="3.5" rx="1" fill="#ddd" stroke="#aaa" stroke-width="0.8"/>
<path d="M340.5 101.5H347.5" stroke="#999" stroke-width="0.8"/>
<path d="M340.5 103.7H347.5" stroke="#999" stroke-width="0.8"/>
<path d="M340.5 105.9H347.5" stroke="#999" stroke-width="0.8"/>
<path d="M340.5 108.1H347.5" stroke="#999" stroke-width="0.8"/>
<rect x="367.5" y="91.5" width="10" height="5" fill="#c8c8c8" stroke="#999" stroke-width="0.8"/>
<path d="M371 99.5L378.5 113.5L385.5 99.5L385.5 94M371 99.5L379 104.5L385.5 94" fill="none" stroke="#888" stroke-width="0.9"/>
<rect x="381" y="104" width="10" height="10" rx="2" fill="#c4c4c4"/>
<path d="M386.0 105.5V112.5M382.8 107.1L389.2 110.9M382.8 110.9L389.2 107.1" stroke="#fff" stroke-width="1.3"/>
<circle cx="386.0" cy="109.0" r="1.6" fill="#c4c4c4" stroke="#fff" stroke-width="0.8"/>
<rect x="434" y="89" width="2" height="2" fill="#fff"/><rect x="433" y="88" width="2" height="2" fill="#bdbdbd"/>
<rect x="437" y="92" width="2" height="2" fill="#fff"/><rect x="436" y="91" width="2" height="2" fill="#bdbdbd"/>
<rect x="434" y="95" width="2" height="2" fill="#fff"/><rect x="433" y="94" width="2" height="2" fill="#bdbdbd"/>
<rect x="437" y="98" width="2" height="2" fill="#fff"/><rect x="436" y="97" width="2" height="2" fill="#bdbdbd"/>
<rect x="434" y="101" width="2" height="2" fill="#fff"/><rect x="433" y="100" width="2" height="2" fill="#bdbdbd"/>
<rect x="437" y="104" width="2" height="2" fill="#fff"/><rect x="436" y="103" width="2" height="2" fill="#bdbdbd"/>
<rect x="434" y="107" width="2" height="2" fill="#fff"/><rect x="433" y="106" width="2" height="2" fill="#bdbdbd"/>
<rect x="437" y="110" width="2" height="2" fill="#fff"/><rect x="436" y="109" width="2" height="2" fill="#bdbdbd"/>
<rect x="434" y="113" width="2" height="2" fill="#fff"/><rect x="433" y="112" width="2" height="2" fill="#bdbdbd"/>
<rect x="437" y="116" width="2" height="2" fill="#fff"/><rect x="436" y="115" width="2" height="2" fill="#bdbdbd"/>
<path d="M444.5 100.5L449.0 96.0H464.5V105.0H449.0Z" fill="#f3d23a" stroke="#c9a000" stroke-width="1"/>
<text x="456.5" y="103.9" font-family="Liberation Sans" font-weight="bold" font-size="9.5" fill="#222" text-anchor="middle">abc</text>
<rect x="479.5" y="95.5" width="23" height="17" fill="#dde8f4" stroke="#6aa0e0" stroke-width="1"/>
<path d="M481.0 100.75L485.25 96.5H498.5V105.0H485.25Z" fill="#f3d23a" stroke="#c9a000" stroke-width="1"/>
<text x="491.625" y="103.9" font-family="Liberation Sans" font-weight="bold" font-size="9" fill="#222" text-anchor="middle">ab</text>
<circle cx="497" cy="107.8" r="4" fill="#b41e1e"/><circle cx="496" cy="106.5" r="1.3" fill="#e88"/>
<path d="M515.0 100.5L519.5 96.0H535.0V105.0H519.5Z" fill="#e6e6e6" stroke="#b0b0b0" stroke-width="1"/>
<text x="527.0" y="103.9" font-family="Liberation Sans" font-weight="bold" font-size="9" fill="#888" text-anchor="middle">ab</text>
<circle cx="532.6" cy="109" r="4" fill="#8a8a8a"/>
<path d="M549.7 100.5L554.2 96.0H569.4000000000001V105.0H554.2Z" fill="#e6e6e6" stroke="#b0b0b0" stroke-width="1"/>
<text x="561.5500000000001" y="103.9" font-family="Liberation Sans" font-weight="bold" font-size="9" fill="#888" text-anchor="middle">abc</text>
<path d="M557 110.5C560 106 569 106 572.5 110.5C569 114.5 560 114.5 557 110.5Z" fill="#f0f0f0" stroke="#777" stroke-width="0.8"/><circle cx="564.8" cy="110.3" r="2.2" fill="#777"/>
<path d="M584.7 100.5L589.2 96.0H604.2V105.0H589.2Z" fill="#e6e6e6" stroke="#b0b0b0" stroke-width="1"/>
<text x="596.45" y="103.9" font-family="Liberation Sans" font-weight="bold" font-size="9" fill="#888" text-anchor="middle">abc</text>
<rect x="597" y="104.2" width="11" height="10.5" rx="1" fill="#9c9c9c"/><path d="M598.5 107.5H602.5V105.5L606.5 109.5L602.5 113.5V111.5H598.5Z" fill="#e6e6e6"/>
<path d="M619.7 100.5L624.2 96.0H639.5V105.0H624.2Z" fill="#e6e6e6" stroke="#b0b0b0" stroke-width="1"/>
<text x="631.6" y="103.9" font-family="Liberation Sans" font-weight="bold" font-size="9" fill="#888" text-anchor="middle">abc</text>
<rect x="632" y="104.2" width="11" height="10.5" rx="1" fill="#9c9c9c"/><circle cx="637.5" cy="109.2" r="3" fill="none" stroke="#eee" stroke-width="1.2"/>
<path d="M654.5 100.5L659.0 96.0H674.3V105.0H659.0Z" fill="#e6e6e6" stroke="#b0b0b0" stroke-width="1"/>
<text x="666.4" y="103.9" font-family="Liberation Sans" font-weight="bold" font-size="9" fill="#888" text-anchor="middle">abc</text>
<rect x="667" y="104.2" width="11" height="10.5" rx="1" fill="#c4c4c4"/><path d="M669 113L676 106" stroke="#f4f4f4" stroke-width="1.8"/>
<rect x="728" y="89" width="2" height="2" fill="#fff"/><rect x="727" y="88" width="2" height="2" fill="#bdbdbd"/>
<rect x="731" y="92" width="2" height="2" fill="#fff"/><rect x="730" y="91" width="2" height="2" fill="#bdbdbd"/>
<rect x="728" y="95" width="2" height="2" fill="#fff"/><rect x="727" y="94" width="2" height="2" fill="#bdbdbd"/>
<rect x="731" y="98" width="2" height="2" fill="#fff"/><rect x="730" y="97" width="2" height="2" fill="#bdbdbd"/>
<rect x="728" y="101" width="2" height="2" fill="#fff"/><rect x="727" y="100" width="2" height="2" fill="#bdbdbd"/>
<rect x="731" y="104" width="2" height="2" fill="#fff"/><rect x="730" y="103" width="2" height="2" fill="#bdbdbd"/>
<rect x="728" y="107" width="2" height="2" fill="#fff"/><rect x="727" y="106" width="2" height="2" fill="#bdbdbd"/>
<rect x="731" y="110" width="2" height="2" fill="#fff"/><rect x="730" y="109" width="2" height="2" fill="#bdbdbd"/>
<rect x="728" y="113" width="2" height="2" fill="#fff"/><rect x="727" y="112" width="2" height="2" fill="#bdbdbd"/>
<rect x="731" y="116" width="2" height="2" fill="#fff"/><rect x="730" y="115" width="2" height="2" fill="#bdbdbd"/>
<rect x="828" y="89" width="2" height="2" fill="#fff"/><rect x="827" y="88" width="2" height="2" fill="#bdbdbd"/>
<rect x="831" y="92" width="2" height="2" fill="#fff"/><rect x="830" y="91" width="2" height="2" fill="#bdbdbd"/>
<rect x="828" y="95" width="2" height="2" fill="#fff"/><rect x="827" y="94" width="2" height="2" fill="#bdbdbd"/>
<rect x="831" y="98" width="2" height="2" fill="#fff"/><rect x="830" y="97" width="2" height="2" fill="#bdbdbd"/>
<rect x="828" y="101" width="2" height="2" fill="#fff"/><rect x="827" y="100" width="2" height="2" fill="#bdbdbd"/>
<rect x="831" y="104" width="2" height="2" fill="#fff"/><rect x="830" y="103" width="2" height="2" fill="#bdbdbd"/>
<rect x="828" y="107" width="2" height="2" fill="#fff"/><rect x="827" y="106" width="2" height="2" fill="#bdbdbd"/>
<rect x="831" y="110" width="2" height="2" fill="#fff"/><rect x="830" y="109" width="2" height="2" fill="#bdbdbd"/>
<rect x="828" y="113" width="2" height="2" fill="#fff"/><rect x="827" y="112" width="2" height="2" fill="#bdbdbd"/>
<rect x="831" y="116" width="2" height="2" fill="#fff"/><rect x="830" y="115" width="2" height="2" fill="#bdbdbd"/>
<rect x="838" y="101" width="3" height="11" fill="#ccc"/><rect x="838" y="110" width="10" height="2.5" fill="#bbb"/>
<rect x="839.5" y="92.5" width="20" height="18" fill="#fff" stroke="#aaa" stroke-width="1"/>
<text x="849.5" y="105" font-family="Liberation Sans" font-size="8" fill="#444" text-anchor="middle">CSW</text>
<rect x="7" y="128" width="2" height="2" fill="#fff"/><rect x="6" y="127" width="2" height="2" fill="#bdbdbd"/>
<rect x="10" y="131" width="2" height="2" fill="#fff"/><rect x="9" y="130" width="2" height="2" fill="#bdbdbd"/>
<rect x="7" y="134" width="2" height="2" fill="#fff"/><rect x="6" y="133" width="2" height="2" fill="#bdbdbd"/>
<rect x="10" y="137" width="2" height="2" fill="#fff"/><rect x="9" y="136" width="2" height="2" fill="#bdbdbd"/>
<rect x="7" y="140" width="2" height="2" fill="#fff"/><rect x="6" y="139" width="2" height="2" fill="#bdbdbd"/>
<rect x="10" y="143" width="2" height="2" fill="#fff"/><rect x="9" y="142" width="2" height="2" fill="#bdbdbd"/>
<rect x="7" y="146" width="2" height="2" fill="#fff"/><rect x="6" y="145" width="2" height="2" fill="#bdbdbd"/>
<rect x="10" y="149" width="2" height="2" fill="#fff"/><rect x="9" y="148" width="2" height="2" fill="#bdbdbd"/>
<rect x="7" y="152" width="2" height="2" fill="#fff"/><rect x="6" y="151" width="2" height="2" fill="#bdbdbd"/>
<rect x="10" y="155" width="2" height="2" fill="#fff"/><rect x="9" y="154" width="2" height="2" fill="#bdbdbd"/>
<rect x="19" y="130.5" width="11" height="22" rx="2" fill="#a8bc98" stroke="#7a8a70" stroke-width="0.8"/><rect x="20.5" y="132" width="8" height="3" fill="#d8e4cc"/><circle cx="24.5" cy="138.5" r="1.8" fill="#111"/><rect x="20.5" y="145" width="8" height="3" fill="#8a9a80"/><rect x="20" y="151" width="9" height="2.5" fill="#333"/>
<rect x="30.5" y="143" width="10.5" height="10.5" rx="1" fill="#333"/>
<rect x="31.5" y="144.2" width="2.4" height="2.2" fill="#eee"/>
<rect x="34.7" y="144.2" width="2.4" height="2.2" fill="#eee"/>
<rect x="37.9" y="144.2" width="2.4" height="2.2" fill="#eee"/>
<rect x="31.5" y="147.39999999999998" width="2.4" height="2.2" fill="#eee"/>
<rect x="34.7" y="147.39999999999998" width="2.4" height="2.2" fill="#eee"/>
<rect x="37.9" y="147.39999999999998" width="2.4" height="2.2" fill="#eee"/>
<rect x="31.5" y="150.6" width="2.4" height="2.2" fill="#eee"/>
<rect x="34.7" y="150.6" width="2.4" height="2.2" fill="#eee"/>
<rect x="37.9" y="150.6" width="2.4" height="2.2" fill="#eee"/>
<path d="M31 136.5H36V142" fill="none" stroke="#f00" stroke-width="1.6"/><path d="M33.5 140.5H38.5L36 143.5Z" fill="#f00"/>
<circle cx="61.8" cy="136.5" r="2.4" fill="#ffee00" stroke="#bba800" stroke-width="0.5"/>
<circle cx="69.6" cy="136.5" r="2.4" fill="#ffee00" stroke="#bba800" stroke-width="0.5"/>
<circle cx="56.7" cy="144" r="2.4" fill="#ffee00" stroke="#bba800" stroke-width="0.5"/>
<path d="M68 142V152M63 147H73" stroke="#000" stroke-width="2.3"/>
<rect x="82" y="127" width="1" height="30" fill="#c0c0c0"/><rect x="83" y="127" width="1" height="30" fill="#fff"/>
<path d="M95 149L100.5 134M95.5 149.5L108.5 140" stroke="#f00" stroke-width="1.1"/><path d="M98.5 136.5L100.8 133.5L101.5 137.5M105 139.5L108.8 139.8L106.5 142.5" fill="none" stroke="#f00" stroke-width="1.1"/>
<circle cx="101" cy="132.7" r="2.3" fill="#ffee00" stroke="#bba800" stroke-width="0.5"/><circle cx="109.5" cy="139.3" r="2.3" fill="#ffee00" stroke="#bba800" stroke-width="0.5"/>
<circle cx="94.8" cy="149.4" r="3.6" fill="#66ee00" stroke="#111" stroke-width="0.9"/>
<path d="M128.5 149.4L140.2 145.1L131.7 136.5L143.8 133.5" fill="none" stroke="#f00" stroke-width="1.1"/>
<circle cx="140.2" cy="145.1" r="2.4" fill="#ffee00" stroke="#bba800" stroke-width="0.5"/><circle cx="131.7" cy="136.5" r="2.4" fill="#ffee00" stroke="#bba800" stroke-width="0.5"/>
<circle cx="128.5" cy="149.4" r="3" fill="#66ee00" stroke="#111" stroke-width="0.9"/><circle cx="143.8" cy="133.5" r="3" fill="#66ee00" stroke="#111" stroke-width="0.9"/>
<path d="M163 136.7L174.5 133L180.8 139.5L178.4 149.9L163 150.2Z M163 136.7L173.2 139.5L180.8 139.5M174.5 133L173.2 139.5L170 145.7L163 150.2M170 145.7L178.4 149.9" fill="none" stroke="#f33" stroke-width="1"/>
<circle cx="163" cy="136.7" r="2.7" fill="#66ee00" stroke="#55aa00" stroke-width="0.4"/>
<circle cx="174.5" cy="133" r="2.7" fill="#66ee00" stroke="#55aa00" stroke-width="0.4"/>
<circle cx="180.8" cy="139.5" r="2.7" fill="#66ee00" stroke="#55aa00" stroke-width="0.4"/>
<circle cx="178.4" cy="149.9" r="2.7" fill="#66ee00" stroke="#55aa00" stroke-width="0.4"/>
<circle cx="163" cy="150.2" r="2.7" fill="#66ee00" stroke="#55aa00" stroke-width="0.4"/>
<circle cx="173.2" cy="139.5" r="1.8" fill="#ffee00"/>
<circle cx="170" cy="145.7" r="1.8" fill="#ffee00"/>
<circle cx="197.5" cy="134" r="1.5" fill="#66dd00"/><circle cx="201.5" cy="137" r="1.5" fill="#66dd00"/>
<path d="M202.5 130.5L207 138L198.5 144" fill="none" stroke="#222" stroke-width="0.9"/><path d="M207.5 141V152.5H217.5" fill="none" stroke="#222" stroke-width="0.9"/>
<path d="M198 148.5H202V147L205 149.5L202 152V150.5H198Z" fill="#f00"/>
<circle cx="213.5" cy="144" r="1.4" fill="#ffee00" stroke="#aa9900" stroke-width="0.4"/><circle cx="210" cy="148.5" r="1.4" fill="#ffee00" stroke="#aa9900" stroke-width="0.4"/>
<path d="M230.5 131.5L242.5 130.3L238 143L230.5 144.5Z" fill="#77ee00" stroke="#333" stroke-width="0.6"/><text x="235" y="141" font-family="Liberation Sans" font-size="8" fill="#111">1</text>
<path d="M246.5 130.5L253.5 132L253.8 145.3L244.5 141.5Z" fill="#ffee00" stroke="#333" stroke-width="0.6"/><text x="247.5" y="140" font-family="Liberation Sans" font-size="8" fill="#111">2</text>
<path d="M243.5 131L241.5 146M245.5 132L242.5 146" stroke="#999" stroke-width="1"/><ellipse cx="239.5" cy="150" rx="1.8" ry="3.2" transform="rotate(20 239.5 150)" fill="none" stroke="#c01010" stroke-width="1.3"/><ellipse cx="246.5" cy="149.5" rx="1.8" ry="3.2" transform="rotate(-25 246.5 149.5)" fill="none" stroke="#c01010" stroke-width="1.3"/>
<rect x="260" y="127" width="1" height="30" fill="#c0c0c0"/><rect x="261" y="127" width="1" height="30" fill="#fff"/>
<rect x="268.5" y="133.5" width="21" height="15.5" fill="#e0e0e0" stroke="#999" stroke-width="0.8"/>
<path d="M271.0 131.5H287.0L291.0 135.5V146.0H271.0Z" fill="#fff" stroke="#888" stroke-width="1"/>
<path d="M287.0 131.5V135.5H291.0" fill="none" stroke="#888" stroke-width="1"/>
<rect x="303.8" y="133.5" width="21" height="15.5" fill="#e0e0e0" stroke="#999" stroke-width="0.8"/>
<path d="M306.3 131.5H322.3L326.3 135.5V146.0H306.3Z" fill="#fff" stroke="#888" stroke-width="1"/>
<path d="M322.3 131.5V135.5H326.3" fill="none" stroke="#888" stroke-width="1"/>
<rect x="1044" y="0" width="0" height="0"/>
<g transform="rotate(10 315 139)"><rect x="308" y="133.5" width="8.5" height="10" fill="#22dd22" stroke="#333" stroke-width="0.5"/></g><path d="M317.5 135L322.5 140.5V145H316Z" fill="#ffee00" stroke="#333" stroke-width="0.5"/>
<path d="M285.9 146.5H288.5V149.5H290.7L287.2 153.5L283.7 149.5H285.9Z" fill="#f00"/>
<path d="M320.9 146.5H323.5V149.5H325.7L322.2 153.5L318.7 149.5H320.9Z" fill="#f00"/>
<rect x="7" y="169.5" width="2" height="2" fill="#fff"/><rect x="6" y="168.5" width="2" height="2" fill="#bdbdbd"/>
<rect x="10" y="172.5" width="2" height="2" fill="#fff"/><rect x="9" y="171.5" width="2" height="2" fill="#bdbdbd"/>
<rect x="13" y="169.5" width="2" height="2" fill="#fff"/><rect x="12" y="168.5" width="2" height="2" fill="#bdbdbd"/>
<rect x="16" y="172.5" width="2" height="2" fill="#fff"/><rect x="15" y="171.5" width="2" height="2" fill="#bdbdbd"/>
<rect x="19" y="169.5" width="2" height="2" fill="#fff"/><rect x="18" y="168.5" width="2" height="2" fill="#bdbdbd"/>
<rect x="22" y="172.5" width="2" height="2" fill="#fff"/><rect x="21" y="171.5" width="2" height="2" fill="#bdbdbd"/>
<rect x="25" y="169.5" width="2" height="2" fill="#fff"/><rect x="24" y="168.5" width="2" height="2" fill="#bdbdbd"/>
<rect x="28" y="172.5" width="2" height="2" fill="#fff"/><rect x="27" y="171.5" width="2" height="2" fill="#bdbdbd"/>
<rect x="31" y="169.5" width="2" height="2" fill="#fff"/><rect x="30" y="168.5" width="2" height="2" fill="#bdbdbd"/>
<rect x="34" y="172.5" width="2" height="2" fill="#fff"/><rect x="33" y="171.5" width="2" height="2" fill="#bdbdbd"/>
<rect x="37" y="169.5" width="2" height="2" fill="#fff"/><rect x="36" y="168.5" width="2" height="2" fill="#bdbdbd"/>
<rect x="40" y="172.5" width="2" height="2" fill="#fff"/><rect x="39" y="171.5" width="2" height="2" fill="#bdbdbd"/>
<rect x="43" y="169.5" width="2" height="2" fill="#fff"/><rect x="42" y="168.5" width="2" height="2" fill="#bdbdbd"/>
<rect x="46" y="172.5" width="2" height="2" fill="#fff"/><rect x="45" y="171.5" width="2" height="2" fill="#bdbdbd"/>
<path d="M16.1 179.9L22.9 195L29.7 179.9H35.7" fill="none" stroke="#3c5a78" stroke-width="1.3"/>
<circle cx="16.1" cy="179.9" r="2" fill="#eee" stroke="#3c5a78" stroke-width="1"/>
<circle cx="22.9" cy="195" r="2" fill="#eee" stroke="#3c5a78" stroke-width="1"/>
<circle cx="29.7" cy="179.9" r="2" fill="#eee" stroke="#3c5a78" stroke-width="1"/>
<circle cx="35.7" cy="179.9" r="2" fill="#eee" stroke="#3c5a78" stroke-width="1"/>
<rect x="28.2" y="192" width="9.8" height="9.8" rx="2" fill="#5b9a5f" stroke="#3f7a45" stroke-width="0.6"/>
<path d="M33.1 193.6V200.20000000000002M29.8 196.9H36.4" stroke="#fff" stroke-width="1.9"/>
<rect x="13.8" y="212.0" width="6.6" height="6.6" fill="#1e3a5c"/>
<rect x="20.3" y="212.0" width="6.6" height="6.6" fill="#6c9ad0"/>
<rect x="26.8" y="212.0" width="6.6" height="6.6" fill="#1e3a5c"/>
<rect x="13.8" y="218.5" width="6.6" height="6.6" fill="#6c9ad0"/>
<rect x="20.3" y="218.5" width="6.6" height="6.6" fill="#1e3a5c"/>
<rect x="26.8" y="218.5" width="6.6" height="6.6" fill="#6c9ad0"/>
<rect x="13.8" y="225.0" width="6.6" height="6.6" fill="#1e3a5c"/>
<rect x="20.3" y="225.0" width="6.6" height="6.6" fill="#6c9ad0"/>
<rect x="26.8" y="225.0" width="6.6" height="6.6" fill="#1e3a5c"/>
<rect x="29" y="226.8" width="9.2" height="9.2" rx="2" fill="#5b9a5f" stroke="#3f7a45" stroke-width="0.6"/>
<path d="M33.6 228.4V234.4M30.6 231.4H36.6" stroke="#fff" stroke-width="1.9"/>
<path d="M15 252C13 247 17 245 21 246.5C23 244.8 29 244.8 31.5 248C33.5 251 32 255 30 256.5L29 262.5C28 264 26 264 25.5 262L25 257C23 258 21 257 20 255L19 258L17.5 256C16 255 15.5 254 15 252Z" fill="#6b9ad0" stroke="#2e4e72" stroke-width="0.9"/>
<rect x="29" y="261" width="9" height="9" rx="2" fill="#5b9a5f" stroke="#3f7a45" stroke-width="0.6"/>
<path d="M33.5 262.6V268.4M30.6 265.5H36.4" stroke="#fff" stroke-width="1.9"/>
<path d="M14.5 303.5C17 295 24 284 37 280.5C35 289 27 297 18.5 298.5Z" fill="#7aa6dc" stroke="#2e4e72" stroke-width="0.9"/><path d="M14.5 303.5L33 283.5" stroke="#2e4e72" stroke-width="0.7"/>
<rect x="29" y="295" width="9" height="9" rx="2" fill="#5b9a5f" stroke="#3f7a45" stroke-width="0.6"/>
<path d="M33.5 296.6V302.4M30.6 299.5H36.4" stroke="#fff" stroke-width="1.9"/>
<path d="M14.5 315C22 315 33 316.5 37.5 325.5C30 326 21 331 14.5 335.5C18 329 19 321 14.5 315Z" fill="#6b9ad0" stroke="#2e4e72" stroke-width="1"/><path d="M21 315.5C23.5 321 23 328 20 332M26 316.5C28.5 320 29 325 27 328.5M31 319C33 321 33.5 324 32.5 326" fill="none" stroke="#2e4e72" stroke-width="0.8"/>
<rect x="29" y="329" width="9" height="9" rx="2" fill="#5b9a5f" stroke="#3f7a45" stroke-width="0.6"/>
<path d="M33.5 330.6V336.4M30.6 333.5H36.4" stroke="#fff" stroke-width="1.9"/>
<rect x="15.5" y="350.8" width="19.5" height="13.5" rx="4.5" fill="#6b9ad0" stroke="#1e3a5c" stroke-width="1.6"/>
<rect x="29" y="362.8" width="9" height="9" rx="2" fill="#5b9a5f" stroke="#3f7a45" stroke-width="0.6"/>
<path d="M33.5 364.40000000000003V370.2M30.6 367.3H36.4" stroke="#fff" stroke-width="1.9"/>
<rect x="15.5" y="384.8" width="19.5" height="13" rx="4.5" fill="#6b9ad0" stroke="#1e3a5c" stroke-width="1.2"/><rect x="19" y="386.5" width="4" height="4" fill="#1e3a5c"/><rect x="27" y="386.5" width="4" height="4" fill="#1e3a5c"/><rect x="23" y="390.5" width="4" height="4" fill="#1e3a5c"/><rect x="19" y="394.5" width="4" height="3" fill="#1e3a5c"/>
<rect x="29" y="396.8" width="9" height="9" rx="2" fill="#5b9a5f" stroke="#3f7a45" stroke-width="0.6"/>
<path d="M33.5 398.40000000000003V404.2M30.6 401.3H36.4" stroke="#fff" stroke-width="1.9"/>
<ellipse cx="25.8" cy="426" rx="11.5" ry="10.3" fill="#8ab4e0" stroke="#5a86b8" stroke-width="0.8"/><path d="M18 421H34M16 427H36M19 432H33M25.8 416V436M20 417.5C17 425 19 432 22 435M31.5 417.5C34.5 425 32.5 432 29.5 435" fill="none" stroke="#e8f0fa" stroke-width="0.8"/><path d="M20 421L24 420L23 426L19 428Z M27 422L31 421L32 426L28 430Z" fill="#2e4e72" opacity="0.7"/>
<rect x="29" y="431" width="9" height="9" rx="2" fill="#5b9a5f" stroke="#3f7a45" stroke-width="0.6"/>
<path d="M33.5 432.6V438.4M30.6 435.5H36.4" stroke="#fff" stroke-width="1.9"/>
<ellipse cx="25.8" cy="460.1" rx="11.5" ry="10" fill="#2a4a70" stroke="#111" stroke-width="0.8"/><path d="M15 456H36.5M14.5 461H37M15.5 466H36" stroke="#7aa6dc" stroke-width="2"/><ellipse cx="25.8" cy="460.1" rx="4.5" ry="10" fill="none" stroke="#aac6e8" stroke-width="1.2"/>
<rect x="29" y="464.5" width="9" height="9" rx="2" fill="#5b9a5f" stroke="#3f7a45" stroke-width="0.6"/>
<path d="M33.5 466.1V471.9M30.6 469.0H36.4" stroke="#fff" stroke-width="1.9"/>
<ellipse cx="25.8" cy="494.3" rx="11.5" ry="10.3" fill="#e4eef8" stroke="#5a8ac0" stroke-width="0.9"/><path d="M16 489H35.5M14.5 494.3H37M16 499.5H35.5M25.8 484V504.5" stroke="#8ab0d8" stroke-width="0.7"/><ellipse cx="25.8" cy="494.3" rx="5" ry="10.3" fill="none" stroke="#8ab0d8" stroke-width="0.7"/>
<path d="M19.5 488.5L23.5 500L28 488.5H32" fill="none" stroke="#222" stroke-width="1"/><circle cx="19.5" cy="488.5" r="1.3" fill="#fff" stroke="#222" stroke-width="0.7"/><circle cx="23.5" cy="500" r="1.3" fill="#fff" stroke="#222" stroke-width="0.7"/><circle cx="28" cy="488.5" r="1.3" fill="#fff" stroke="#222" stroke-width="0.7"/><circle cx="32" cy="488.5" r="1.3" fill="#fff" stroke="#222" stroke-width="0.7"/>
<rect x="29" y="499" width="9" height="9" rx="2" fill="#5b9a5f" stroke="#3f7a45" stroke-width="0.6"/>
<path d="M33.5 500.6V506.4M30.6 503.5H36.4" stroke="#fff" stroke-width="1.9"/>
<path d="M22.5 520C27 519 29.5 522 28.5 526C27.5 531 23 535 18.5 538C21 534.5 23 531.5 23.5 528.5C20 528.5 18.5 526 19 523.5C19.3 521.5 20.5 520.3 22.5 520Z" fill="#5a8ac0" stroke="#3a6294" stroke-width="0.6"/>
<rect x="29" y="533" width="9" height="9" rx="2" fill="#5b9a5f" stroke="#3f7a45" stroke-width="0.6"/>
<path d="M33.5 534.6V540.4M30.6 537.5H36.4" stroke="#fff" stroke-width="1.9"/>
<path d="M10.4 553.6L16.9 569.3L23.7 553.6H29.7" fill="none" stroke="#3c5a78" stroke-width="1.3"/>
<circle cx="10.4" cy="553.6" r="2" fill="#eee" stroke="#3c5a78" stroke-width="1"/>
<circle cx="16.9" cy="569.3" r="2" fill="#eee" stroke="#3c5a78" stroke-width="1"/>
<circle cx="23.7" cy="553.6" r="2" fill="#eee" stroke="#3c5a78" stroke-width="1"/>
<circle cx="29.7" cy="553.6" r="2" fill="#eee" stroke="#3c5a78" stroke-width="1"/>
<rect x="23.3" y="567" width="9" height="9" rx="2" fill="#d2a91c"/>
<path d="M27.8 568.5V574.5M25.1 569.6L30.499999999999996 573.4M25.1 573.4L30.499999999999996 569.6" stroke="#fff" stroke-width="1.3"/>
<circle cx="27.8" cy="571.5" r="1.6" fill="#d2a91c" stroke="#fff" stroke-width="0.8"/>
<path d="M37.9 561.6H47.9L42.9 566Z" fill="#000"/>
<rect x="14" y="591.5" width="12" height="16" fill="#f0f0f0" stroke="#999" stroke-width="0.8"/><rect x="16.5" y="589" width="13" height="16" fill="#fff" stroke="#888" stroke-width="0.8"/><text x="19" y="602" font-family="Liberation Sans" font-size="8" fill="#3a5a8a">b</text>
<rect x="22" y="587" width="15" height="4.5" fill="#e8e040" stroke="#aa9a00" stroke-width="0.5"/><rect x="27" y="585.5" width="3" height="7" fill="#fff" stroke="#666" stroke-width="0.6"/>
<rect x="28.5" y="599.5" width="10" height="10" rx="2" fill="#d2a91c"/>
<path d="M33.5 601.0V608.0M30.3 602.6L36.7 606.4M30.3 606.4L36.7 602.6" stroke="#fff" stroke-width="1.3"/>
<circle cx="33.5" cy="604.5" r="1.6" fill="#d2a91c" stroke="#fff" stroke-width="0.8"/>
<rect x="7" y="626" width="2" height="2" fill="#fff"/><rect x="6" y="625" width="2" height="2" fill="#bdbdbd"/>
<rect x="10" y="629" width="2" height="2" fill="#fff"/><rect x="9" y="628" width="2" height="2" fill="#bdbdbd"/>
<rect x="13" y="626" width="2" height="2" fill="#fff"/><rect x="12" y="625" width="2" height="2" fill="#bdbdbd"/>
<rect x="16" y="629" width="2" height="2" fill="#fff"/><rect x="15" y="628" width="2" height="2" fill="#bdbdbd"/>
<rect x="19" y="626" width="2" height="2" fill="#fff"/><rect x="18" y="625" width="2" height="2" fill="#bdbdbd"/>
<rect x="22" y="629" width="2" height="2" fill="#fff"/><rect x="21" y="628" width="2" height="2" fill="#bdbdbd"/>
<rect x="25" y="626" width="2" height="2" fill="#fff"/><rect x="24" y="625" width="2" height="2" fill="#bdbdbd"/>
<rect x="28" y="629" width="2" height="2" fill="#fff"/><rect x="27" y="628" width="2" height="2" fill="#bdbdbd"/>
<rect x="31" y="626" width="2" height="2" fill="#fff"/><rect x="30" y="625" width="2" height="2" fill="#bdbdbd"/>
<rect x="34" y="629" width="2" height="2" fill="#fff"/><rect x="33" y="628" width="2" height="2" fill="#bdbdbd"/>
<rect x="37" y="626" width="2" height="2" fill="#fff"/><rect x="36" y="625" width="2" height="2" fill="#bdbdbd"/>
<rect x="40" y="629" width="2" height="2" fill="#fff"/><rect x="39" y="628" width="2" height="2" fill="#bdbdbd"/>
<rect x="43" y="626" width="2" height="2" fill="#fff"/><rect x="42" y="625" width="2" height="2" fill="#bdbdbd"/>
<rect x="46" y="629" width="2" height="2" fill="#fff"/><rect x="45" y="628" width="2" height="2" fill="#bdbdbd"/>
<path d="M13.6 648.6H37.2M28.2 634V656.5" stroke="#444" stroke-width="1"/><circle cx="28.2" cy="648.6" r="5" fill="none" stroke="#cc2222" stroke-width="1.3" stroke-dasharray="2.5,1.8"/>
<path d="M18 690L20.7 692.5L23.4 690M18 694L20.7 696.5L23.4 694" fill="none" stroke="#000" stroke-width="1.2"/>
<rect x="340" y="342" width="2" height="1.5" fill="#fff"/><rect x="339" y="341" width="2" height="2" fill="#c4c4c4"/>
<rect x="340" y="346.85" width="2" height="1.5" fill="#fff"/><rect x="339" y="345.85" width="2" height="2" fill="#c4c4c4"/>
<rect x="340" y="351.70000000000005" width="2" height="1.5" fill="#fff"/><rect x="339" y="350.70000000000005" width="2" height="2" fill="#c4c4c4"/>
<rect x="340" y="356.55000000000007" width="2" height="1.5" fill="#fff"/><rect x="339" y="355.55000000000007" width="2" height="2" fill="#c4c4c4"/>
<rect x="340" y="361.4000000000001" width="2" height="1.5" fill="#fff"/><rect x="339" y="360.4000000000001" width="2" height="2" fill="#c4c4c4"/>
<rect x="340" y="366.2500000000001" width="2" height="1.5" fill="#fff"/><rect x="339" y="365.2500000000001" width="2" height="2" fill="#c4c4c4"/>
<rect x="340" y="371.10000000000014" width="2" height="1.5" fill="#fff"/><rect x="339" y="370.10000000000014" width="2" height="2" fill="#c4c4c4"/>
<rect x="340" y="375.95000000000016" width="2" height="1.5" fill="#fff"/><rect x="339" y="374.95000000000016" width="2" height="2" fill="#c4c4c4"/>
<rect x="340" y="380.8000000000002" width="2" height="1.5" fill="#fff"/><rect x="339" y="379.8000000000002" width="2" height="2" fill="#c4c4c4"/>
<rect x="340" y="385.6500000000002" width="2" height="1.5" fill="#fff"/><rect x="339" y="384.6500000000002" width="2" height="2" fill="#c4c4c4"/>
<rect x="340" y="390.5000000000002" width="2" height="1.5" fill="#fff"/><rect x="339" y="389.5000000000002" width="2" height="2" fill="#c4c4c4"/>
<rect x="340" y="395.35000000000025" width="2" height="1.5" fill="#fff"/><rect x="339" y="394.35000000000025" width="2" height="2" fill="#c4c4c4"/>
<rect x="340" y="400.2000000000003" width="2" height="1.5" fill="#fff"/><rect x="339" y="399.2000000000003" width="2" height="2" fill="#c4c4c4"/>
<rect x="340" y="405.0500000000003" width="2" height="1.5" fill="#fff"/><rect x="339" y="404.0500000000003" width="2" height="2" fill="#c4c4c4"/>
<rect x="340" y="409.9000000000003" width="2" height="1.5" fill="#fff"/><rect x="339" y="408.9000000000003" width="2" height="2" fill="#c4c4c4"/>
<rect x="340" y="414.75000000000034" width="2" height="1.5" fill="#fff"/><rect x="339" y="413.75000000000034" width="2" height="2" fill="#c4c4c4"/>
<rect x="340" y="419.60000000000036" width="2" height="1.5" fill="#fff"/><rect x="339" y="418.60000000000036" width="2" height="2" fill="#c4c4c4"/>
<rect x="340" y="424.4500000000004" width="2" height="1.5" fill="#fff"/><rect x="339" y="423.4500000000004" width="2" height="2" fill="#c4c4c4"/>
<rect x="340" y="429.3000000000004" width="2" height="1.5" fill="#fff"/><rect x="339" y="428.3000000000004" width="2" height="2" fill="#c4c4c4"/>
<rect x="340" y="434.15000000000043" width="2" height="1.5" fill="#fff"/><rect x="339" y="433.15000000000043" width="2" height="2" fill="#c4c4c4"/>
<rect x="340" y="439.00000000000045" width="2" height="1.5" fill="#fff"/><rect x="339" y="438.00000000000045" width="2" height="2" fill="#c4c4c4"/>
<rect x="340" y="443.8500000000005" width="2" height="1.5" fill="#fff"/><rect x="339" y="442.8500000000005" width="2" height="2" fill="#c4c4c4"/>
<rect x="340" y="448.7000000000005" width="2" height="1.5" fill="#fff"/><rect x="339" y="447.7000000000005" width="2" height="2" fill="#c4c4c4"/>
<rect x="340" y="453.5500000000005" width="2" height="1.5" fill="#fff"/><rect x="339" y="452.5500000000005" width="2" height="2" fill="#c4c4c4"/>
<rect x="340" y="458.40000000000055" width="2" height="1.5" fill="#fff"/><rect x="339" y="457.40000000000055" width="2" height="2" fill="#c4c4c4"/>
<rect x="340" y="463.25000000000057" width="2" height="1.5" fill="#fff"/><rect x="339" y="462.25000000000057" width="2" height="2" fill="#c4c4c4"/>
<rect x="340" y="468.1000000000006" width="2" height="1.5" fill="#fff"/><rect x="339" y="467.1000000000006" width="2" height="2" fill="#c4c4c4"/>
<rect x="340" y="472.9500000000006" width="2" height="1.5" fill="#fff"/><rect x="339" y="471.9500000000006" width="2" height="2" fill="#c4c4c4"/>
<rect x="340" y="477.80000000000064" width="2" height="1.5" fill="#fff"/><rect x="339" y="476.80000000000064" width="2" height="2" fill="#c4c4c4"/>
<rect x="340" y="482.65000000000066" width="2" height="1.5" fill="#fff"/><rect x="339" y="481.65000000000066" width="2" height="2" fill="#c4c4c4"/>
<rect x="340" y="487.5000000000007" width="2" height="1.5" fill="#fff"/><rect x="339" y="486.5000000000007" width="2" height="2" fill="#c4c4c4"/>
<rect x="340" y="492.3500000000007" width="2" height="1.5" fill="#fff"/><rect x="339" y="491.3500000000007" width="2" height="2" fill="#c4c4c4"/>
<rect x="340" y="497.2000000000007" width="2" height="1.5" fill="#fff"/><rect x="339" y="496.2000000000007" width="2" height="2" fill="#c4c4c4"/>
<rect x="340" y="502.05000000000075" width="2" height="1.5" fill="#fff"/><rect x="339" y="501.05000000000075" width="2" height="2" fill="#c4c4c4"/>
<rect x="340" y="506.9000000000008" width="2" height="1.5" fill="#fff"/><rect x="339" y="505.9000000000008" width="2" height="2" fill="#c4c4c4"/>
<rect x="340" y="511.7500000000008" width="2" height="1.5" fill="#fff"/><rect x="339" y="510.7500000000008" width="2" height="2" fill="#c4c4c4"/>
<rect x="340" y="516.6000000000008" width="2" height="1.5" fill="#fff"/><rect x="339" y="515.6000000000008" width="2" height="2" fill="#c4c4c4"/>
<rect x="57" y="170" width="2" height="2" fill="#fff"/><rect x="56" y="169" width="2" height="2" fill="#bdbdbd"/>
<rect x="60" y="173" width="2" height="2" fill="#fff"/><rect x="59" y="172" width="2" height="2" fill="#bdbdbd"/>
<rect x="63" y="170" width="2" height="2" fill="#fff"/><rect x="62" y="169" width="2" height="2" fill="#bdbdbd"/>
<rect x="66" y="173" width="2" height="2" fill="#fff"/><rect x="65" y="172" width="2" height="2" fill="#bdbdbd"/>
<rect x="69" y="170" width="2" height="2" fill="#fff"/><rect x="68" y="169" width="2" height="2" fill="#bdbdbd"/>
<rect x="72" y="173" width="2" height="2" fill="#fff"/><rect x="71" y="172" width="2" height="2" fill="#bdbdbd"/>
<rect x="75" y="170" width="2" height="2" fill="#fff"/><rect x="74" y="169" width="2" height="2" fill="#bdbdbd"/>
<rect x="78" y="173" width="2" height="2" fill="#fff"/><rect x="77" y="172" width="2" height="2" fill="#bdbdbd"/>
<rect x="81" y="170" width="2" height="2" fill="#fff"/><rect x="80" y="169" width="2" height="2" fill="#bdbdbd"/>
<rect x="84" y="173" width="2" height="2" fill="#fff"/><rect x="83" y="172" width="2" height="2" fill="#bdbdbd"/>
<rect x="87" y="170" width="2" height="2" fill="#fff"/><rect x="86" y="169" width="2" height="2" fill="#bdbdbd"/>
<rect x="90" y="173" width="2" height="2" fill="#fff"/><rect x="89" y="172" width="2" height="2" fill="#bdbdbd"/>
<rect x="93" y="170" width="2" height="2" fill="#fff"/><rect x="92" y="169" width="2" height="2" fill="#bdbdbd"/>
<rect x="96" y="173" width="2" height="2" fill="#fff"/><rect x="95" y="172" width="2" height="2" fill="#bdbdbd"/>
<rect x="99" y="170" width="2" height="2" fill="#fff"/><rect x="98" y="169" width="2" height="2" fill="#bdbdbd"/>
<rect x="102" y="173" width="2" height="2" fill="#fff"/><rect x="101" y="172" width="2" height="2" fill="#bdbdbd"/>
<rect x="105" y="170" width="2" height="2" fill="#fff"/><rect x="104" y="169" width="2" height="2" fill="#bdbdbd"/>
<rect x="108" y="173" width="2" height="2" fill="#fff"/><rect x="107" y="172" width="2" height="2" fill="#bdbdbd"/>
<rect x="111" y="170" width="2" height="2" fill="#fff"/><rect x="110" y="169" width="2" height="2" fill="#bdbdbd"/>
<rect x="114" y="173" width="2" height="2" fill="#fff"/><rect x="113" y="172" width="2" height="2" fill="#bdbdbd"/>
<rect x="117" y="170" width="2" height="2" fill="#fff"/><rect x="116" y="169" width="2" height="2" fill="#bdbdbd"/>
<rect x="120" y="173" width="2" height="2" fill="#fff"/><rect x="119" y="172" width="2" height="2" fill="#bdbdbd"/>
<rect x="123" y="170" width="2" height="2" fill="#fff"/><rect x="122" y="169" width="2" height="2" fill="#bdbdbd"/>
<rect x="126" y="173" width="2" height="2" fill="#fff"/><rect x="125" y="172" width="2" height="2" fill="#bdbdbd"/>
<rect x="129" y="170" width="2" height="2" fill="#fff"/><rect x="128" y="169" width="2" height="2" fill="#bdbdbd"/>
<rect x="132" y="173" width="2" height="2" fill="#fff"/><rect x="131" y="172" width="2" height="2" fill="#bdbdbd"/>
<rect x="135" y="170" width="2" height="2" fill="#fff"/><rect x="134" y="169" width="2" height="2" fill="#bdbdbd"/>
<rect x="138" y="173" width="2" height="2" fill="#fff"/><rect x="137" y="172" width="2" height="2" fill="#bdbdbd"/>
<rect x="141" y="170" width="2" height="2" fill="#fff"/><rect x="140" y="169" width="2" height="2" fill="#bdbdbd"/>
<rect x="144" y="173" width="2" height="2" fill="#fff"/><rect x="143" y="172" width="2" height="2" fill="#bdbdbd"/>
<rect x="147" y="170" width="2" height="2" fill="#fff"/><rect x="146" y="169" width="2" height="2" fill="#bdbdbd"/>
<rect x="150" y="173" width="2" height="2" fill="#fff"/><rect x="149" y="172" width="2" height="2" fill="#bdbdbd"/>
<rect x="153" y="170" width="2" height="2" fill="#fff"/><rect x="152" y="169" width="2" height="2" fill="#bdbdbd"/>
<rect x="156" y="173" width="2" height="2" fill="#fff"/><rect x="155" y="172" width="2" height="2" fill="#bdbdbd"/>
<rect x="203" y="170" width="2" height="2" fill="#fff"/><rect x="202" y="169" width="2" height="2" fill="#bdbdbd"/>
<rect x="206" y="173" width="2" height="2" fill="#fff"/><rect x="205" y="172" width="2" height="2" fill="#bdbdbd"/>
<rect x="209" y="170" width="2" height="2" fill="#fff"/><rect x="208" y="169" width="2" height="2" fill="#bdbdbd"/>
<rect x="212" y="173" width="2" height="2" fill="#fff"/><rect x="211" y="172" width="2" height="2" fill="#bdbdbd"/>
<rect x="215" y="170" width="2" height="2" fill="#fff"/><rect x="214" y="169" width="2" height="2" fill="#bdbdbd"/>
<rect x="218" y="173" width="2" height="2" fill="#fff"/><rect x="217" y="172" width="2" height="2" fill="#bdbdbd"/>
<rect x="221" y="170" width="2" height="2" fill="#fff"/><rect x="220" y="169" width="2" height="2" fill="#bdbdbd"/>
<rect x="224" y="173" width="2" height="2" fill="#fff"/><rect x="223" y="172" width="2" height="2" fill="#bdbdbd"/>
<rect x="227" y="170" width="2" height="2" fill="#fff"/><rect x="226" y="169" width="2" height="2" fill="#bdbdbd"/>
<rect x="230" y="173" width="2" height="2" fill="#fff"/><rect x="229" y="172" width="2" height="2" fill="#bdbdbd"/>
<rect x="233" y="170" width="2" height="2" fill="#fff"/><rect x="232" y="169" width="2" height="2" fill="#bdbdbd"/>
<rect x="236" y="173" width="2" height="2" fill="#fff"/><rect x="235" y="172" width="2" height="2" fill="#bdbdbd"/>
<rect x="239" y="170" width="2" height="2" fill="#fff"/><rect x="238" y="169" width="2" height="2" fill="#bdbdbd"/>
<rect x="242" y="173" width="2" height="2" fill="#fff"/><rect x="241" y="172" width="2" height="2" fill="#bdbdbd"/>
<rect x="245" y="170" width="2" height="2" fill="#fff"/><rect x="244" y="169" width="2" height="2" fill="#bdbdbd"/>
<rect x="248" y="173" width="2" height="2" fill="#fff"/><rect x="247" y="172" width="2" height="2" fill="#bdbdbd"/>
<rect x="251" y="170" width="2" height="2" fill="#fff"/><rect x="250" y="169" width="2" height="2" fill="#bdbdbd"/>
<rect x="254" y="173" width="2" height="2" fill="#fff"/><rect x="253" y="172" width="2" height="2" fill="#bdbdbd"/>
<rect x="257" y="170" width="2" height="2" fill="#fff"/><rect x="256" y="169" width="2" height="2" fill="#bdbdbd"/>
<rect x="260" y="173" width="2" height="2" fill="#fff"/><rect x="259" y="172" width="2" height="2" fill="#bdbdbd"/>
<rect x="263" y="170" width="2" height="2" fill="#fff"/><rect x="262" y="169" width="2" height="2" fill="#bdbdbd"/>
<rect x="266" y="173" width="2" height="2" fill="#fff"/><rect x="265" y="172" width="2" height="2" fill="#bdbdbd"/>
<rect x="269" y="170" width="2" height="2" fill="#fff"/><rect x="268" y="169" width="2" height="2" fill="#bdbdbd"/>
<rect x="272" y="173" width="2" height="2" fill="#fff"/><rect x="271" y="172" width="2" height="2" fill="#bdbdbd"/>
<rect x="275" y="170" width="2" height="2" fill="#fff"/><rect x="274" y="169" width="2" height="2" fill="#bdbdbd"/>
<rect x="278" y="173" width="2" height="2" fill="#fff"/><rect x="277" y="172" width="2" height="2" fill="#bdbdbd"/>
<rect x="281" y="170" width="2" height="2" fill="#fff"/><rect x="280" y="169" width="2" height="2" fill="#bdbdbd"/>
<rect x="284" y="173" width="2" height="2" fill="#fff"/><rect x="283" y="172" width="2" height="2" fill="#bdbdbd"/>
<rect x="287" y="170" width="2" height="2" fill="#fff"/><rect x="286" y="169" width="2" height="2" fill="#bdbdbd"/>
<rect x="290" y="173" width="2" height="2" fill="#fff"/><rect x="289" y="172" width="2" height="2" fill="#bdbdbd"/>
<rect x="293" y="170" width="2" height="2" fill="#fff"/><rect x="292" y="169" width="2" height="2" fill="#bdbdbd"/>
<rect x="296" y="173" width="2" height="2" fill="#fff"/><rect x="295" y="172" width="2" height="2" fill="#bdbdbd"/>
<rect x="299" y="170" width="2" height="2" fill="#fff"/><rect x="298" y="169" width="2" height="2" fill="#bdbdbd"/>
<rect x="302" y="173" width="2" height="2" fill="#fff"/><rect x="301" y="172" width="2" height="2" fill="#bdbdbd"/>
<rect x="307.5" y="164.5" width="13" height="13" rx="2.5" fill="#f4f4f4" stroke="#8a8a8a" stroke-width="1"/>
<rect x="310.5" y="169.5" width="6" height="5" fill="none" stroke="#000" stroke-width="1.2"/><path d="M312.5 169.5V167H318.5V172H316.5" fill="none" stroke="#000" stroke-width="1.2"/>
<rect x="322.5" y="164.5" width="13" height="13" rx="2.5" fill="#f4f4f4" stroke="#8a8a8a" stroke-width="1"/>
<path d="M325.5 167.5L332.5 174.5M332.5 167.5L325.5 174.5" stroke="#000" stroke-width="1.4"/>
<rect x="62" y="189.5" width="10" height="12" fill="#f0f0f0" stroke="#777" stroke-width="1"/><rect x="65" y="186.5" width="10" height="12" fill="#f0f0f0" stroke="#777" stroke-width="1"/><path d="M69.5 193V187C69.5 185 72 185 72 187V192" fill="none" stroke="#3a6ab8" stroke-width="1"/>
<path d="M95 193C98 188.5 106.5 188.5 110 193C106.5 197 98 197 95 193Z" fill="#f4f4f4" stroke="#999" stroke-width="0.8"/><circle cx="102" cy="193" r="2.8" fill="#5a8ad0"/><circle cx="102" cy="193" r="1" fill="#223"/>
<path d="M107 200H112L109.5 203.5Z" fill="#000"/>
<path d="M127 187.5H141L136 194V200.5L132 198.5V194Z" fill="#3aa64a" stroke="#2a8a3a" stroke-width="0.6"/><ellipse cx="134" cy="188" rx="7" ry="1.5" fill="#6cd07a"/>
<rect x="158.5" y="186.5" width="15.5" height="13.5" fill="#fff" stroke="#3a6ad8" stroke-width="1.2"/><rect x="163" y="190" width="3" height="3" fill="#f0a040"/><rect x="163" y="195" width="3" height="3" fill="#f0a040"/><path d="M169.5 188V196M167 194L169.5 198.5L172 194" fill="#e00" stroke="#e00" stroke-width="2"/>
<rect x="190.5" y="186.5" width="15.5" height="13.5" fill="#fff" stroke="#3a6ad8" stroke-width="1.2"/><rect x="195" y="190" width="3" height="3" fill="#f0a040"/><rect x="195" y="195" width="3" height="3" fill="#f0a040"/><path d="M201.5 199V191M199 193L201.5 188.5L204 193" fill="#e00" stroke="#e00" stroke-width="2"/>
<rect x="222.5" y="187" width="13" height="13.5" fill="#f0f0f0" stroke="#aaa" stroke-width="1"/><rect x="232" y="195.5" width="6" height="5" rx="1" fill="#e8545a"/><rect x="233" y="197.5" width="4" height="1.2" fill="#fff"/>
<path d="M64.5 216V223.5H73" fill="none" stroke="#cfe4ff" stroke-width="1" stroke-dasharray="1,1"/>
<rect x="78" y="218" width="11.5" height="11" fill="#fff"/><path d="M80.5 220.5L87 227M87 220.5L80.5 227" stroke="#000" stroke-width="2.3"/>
<rect x="96.5" y="215.5" width="15" height="15" fill="#3a9a6a" stroke="#2a6a50" stroke-width="1"/>
<rect x="114.5" y="215.5" width="220" height="14.5" fill="none" stroke="#e07a20" stroke-width="1" stroke-dasharray="1.2,1.2"/>
<rect x="649.5" y="705.5" width="19" height="19" rx="2" fill="#f2f2f2" stroke="#8a8a8a" stroke-width="1"/>
<ellipse cx="657.5" cy="712.5" rx="3.5" ry="4.5" fill="none" stroke="#222" stroke-width="1.6"/><circle cx="660" cy="718" r="3" fill="none" stroke="#333" stroke-width="1.4"/><path d="M662 710L666 707.5" stroke="#555" stroke-width="0.8" stroke-dasharray="1,1"/>
<rect x="1160.5" y="706" width="15.5" height="18.5" fill="#e4e4e4" stroke="#acacac" stroke-width="1"/>
<path d="M1164 713H1172L1168.0 718Z" fill="#000"/>
<rect x="1183.5" y="708.5" width="12" height="12" fill="#fff" stroke="#8a8a8a" stroke-width="1"/><path d="M1186.3 711.3L1192.7 717.7M1192.7 711.3L1186.3 717.7" stroke="#000" stroke-width="2.2"/>
<rect x="1319.5" y="705.5" width="19" height="19" rx="2" fill="#f2f2f2" stroke="#8a8a8a" stroke-width="1"/><circle cx="1329" cy="715" r="7" fill="none" stroke="#111" stroke-width="2"/><rect x="1326" y="712" width="6" height="6" fill="#fff" stroke="#333" stroke-width="1"/><path d="M1329 708V712M1329 718V722M1322 715H1326M1332 715H1336" stroke="#222" stroke-width="1.5"/>
<rect x="1345.5" y="705.5" width="19" height="19" rx="2" fill="#f2f2f2" stroke="#8a8a8a" stroke-width="1"/><path d="M1355 709L1361.5 721H1348.5Z" fill="#f2eeb0" stroke="#444" stroke-width="1"/><path d="M1355 712.5V717.5M1355 718.8V720" stroke="#222" stroke-width="1.6"/>
<ellipse cx="7.4" cy="11" rx="3.3" ry="5" fill="none" stroke="#f2f03a" stroke-width="2.4"/><path d="M8.5 15.5L12.5 17.5" stroke="#f2f03a" stroke-width="2"/><path d="M5.6 8.5V13" stroke="#333" stroke-width="0.8" opacity="0.6"/><path d="M1.2 15.5L4.6 15.1M5.8 12.6L12.8 3.2" stroke="#1a8a1a" stroke-width="1.7"/>
<path d="M1260.5 0V13C1260.5 15.5 1262 17.5 1264.5 17.5H1362.5V0" fill="none"/>
<rect x="1260.5" y="-2" width="28" height="19.5" rx="3" fill="url(#gb)" stroke="#2f3a4a" stroke-width="1"/>
<rect x="1288.5" y="-2" width="27" height="19.5" fill="url(#gb)" stroke="#2f3a4a" stroke-width="1"/>
<rect x="1315.5" y="-2" width="47" height="19.5" rx="3" fill="url(#gr)" stroke="#3a1a10" stroke-width="1"/>
<rect x="1269.5" y="8.5" width="10" height="4" rx="1" fill="#fff" stroke="#3a4a5a" stroke-width="0.8"/>
<rect x="1297.5" y="4.5" width="8" height="8" fill="none" stroke="#fff" stroke-width="2.2"/><rect x="1300" y="2.5" width="8" height="8" fill="none" stroke="#fff" stroke-width="1.2"/><rect x="1297.5" y="4.5" width="8" height="8" fill="none" stroke="#3a4a5a" stroke-width="0.5"/>
<path d="M1334 4.5L1344 12.5M1344 4.5L1334 12.5" stroke="#3a3a3a" stroke-width="4"/><path d="M1334 4.5L1344 12.5M1344 4.5L1334 12.5" stroke="#fff" stroke-width="2.4"/></svg>
</body></html>
